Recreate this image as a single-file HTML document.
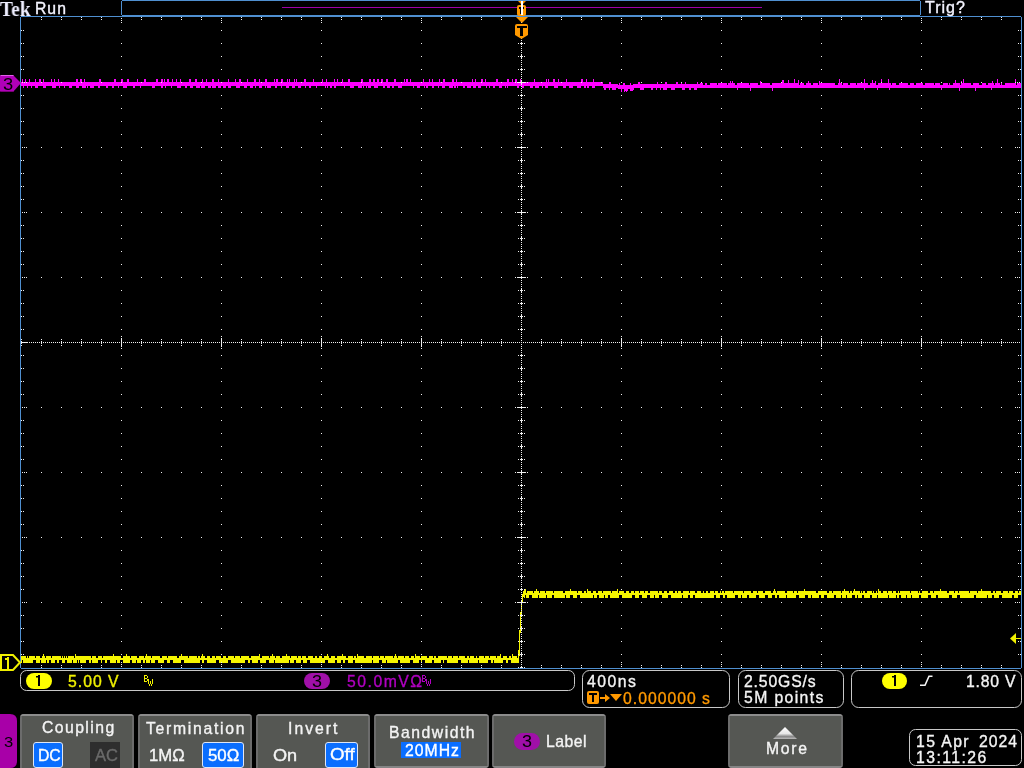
<!DOCTYPE html>
<html><head><meta charset="utf-8">
<style>
html,body{margin:0;padding:0;background:#000;width:1024px;height:768px;overflow:hidden;}
body{position:relative;font-family:"Liberation Sans",sans-serif;color:#fff;}
.t{position:absolute;white-space:nowrap;line-height:1;transform-origin:0 0;-webkit-text-stroke:0.35px currentColor;will-change:transform;}
</style></head><body>
<svg width="1024" height="768" viewBox="0 0 1024 768" shape-rendering="crispEdges" style="position:absolute;left:0;top:0">
<path fill="#4f8fd0" d="M20 16H1022v1H20zM20 668H1022v1H20zM20 16V669h1V16zM1021 16V669h1V16zM121 0H921v1H121zM121 15H921v1H121zM121 0V16h1V0zM920 0V16h1V0z"/>
<path fill="#a000a8" d="M282 7H762v1H282z"/>
<path fill="#ff00ff" d="M21 82V86h1V82zM22 79V86h1V79zM23 82V88h1V82zM24 82V86h1V82zM25 79V86h1V79zM26 82V86h1V82zM27 82V88h1V82zM28 82V86h1V82zM29 79V86h1V79zM30 82V86h1V82zM31 82V88h1V82zM32 82V86h1V82zM33 82V86h1V82zM34 82V86h1V82zM35 79V88h1V79zM36 82V88h1V82zM37 82V88h1V82zM38 82V86h1V82zM39 79V86h1V79zM40 79V86h1V79zM41 82V86h1V82zM42 82V86h1V82zM43 79V88h1V79zM44 82V88h1V82zM45 82V88h1V82zM46 82V86h1V82zM47 82V86h1V82zM48 82V86h1V82zM49 82V86h1V82zM50 82V86h1V82zM51 79V86h1V79zM52 82V88h1V82zM53 82V88h1V82zM54 79V88h1V79zM55 82V88h1V82zM56 82V86h1V82zM57 82V86h1V82zM58 79V86h1V79zM59 82V88h1V82zM60 82V86h1V82zM61 82V86h1V82zM62 82V86h1V82zM63 82V86h1V82zM64 82V88h1V82zM65 82V86h1V82zM66 82V86h1V82zM67 82V86h1V82zM68 82V86h1V82zM69 82V88h1V82zM70 82V88h1V82zM71 82V88h1V82zM72 82V86h1V82zM73 82V86h1V82zM74 82V86h1V82zM75 82V86h1V82zM76 79V88h1V79zM77 79V88h1V79zM78 82V88h1V82zM79 82V86h1V82zM80 79V86h1V79zM81 79V86h1V79zM82 82V88h1V82zM83 82V88h1V82zM84 79V88h1V79zM85 82V88h1V82zM86 82V86h1V82zM87 82V88h1V82zM88 82V86h1V82zM89 82V86h1V82zM90 82V88h1V82zM91 82V88h1V82zM92 82V88h1V82zM93 82V88h1V82zM94 82V86h1V82zM95 82V86h1V82zM96 82V86h1V82zM97 82V86h1V82zM98 82V88h1V82zM99 79V88h1V79zM100 79V86h1V79zM101 82V86h1V82zM102 82V86h1V82zM103 82V86h1V82zM104 82V86h1V82zM105 82V86h1V82zM106 82V88h1V82zM107 82V88h1V82zM108 82V86h1V82zM109 82V86h1V82zM110 82V86h1V82zM111 82V86h1V82zM112 82V88h1V82zM113 82V88h1V82zM114 79V86h1V79zM115 79V86h1V79zM116 82V86h1V82zM117 82V86h1V82zM118 82V88h1V82zM119 82V86h1V82zM120 82V86h1V82zM121 79V86h1V79zM122 79V86h1V79zM123 82V88h1V82zM124 82V88h1V82zM125 82V88h1V82zM126 82V88h1V82zM127 79V86h1V79zM128 79V86h1V79zM129 82V86h1V82zM130 82V86h1V82zM131 82V86h1V82zM132 82V86h1V82zM133 82V88h1V82zM134 82V88h1V82zM135 82V86h1V82zM136 82V86h1V82zM137 79V86h1V79zM138 82V86h1V82zM139 82V86h1V82zM140 82V88h1V82zM141 82V86h1V82zM142 82V86h1V82zM143 82V86h1V82zM144 79V86h1V79zM145 79V86h1V79zM146 82V86h1V82zM147 82V86h1V82zM148 82V86h1V82zM149 82V86h1V82zM150 82V86h1V82zM151 82V86h1V82zM152 82V88h1V82zM153 82V88h1V82zM154 82V88h1V82zM155 82V86h1V82zM156 79V86h1V79zM157 79V86h1V79zM158 82V86h1V82zM159 82V86h1V82zM160 82V86h1V82zM161 79V88h1V79zM162 79V88h1V79zM163 82V86h1V82zM164 79V86h1V79zM165 82V88h1V82zM166 82V86h1V82zM167 79V86h1V79zM168 79V86h1V79zM169 82V86h1V82zM170 82V86h1V82zM171 82V88h1V82zM172 79V86h1V79zM173 82V86h1V82zM174 82V86h1V82zM175 82V86h1V82zM176 79V86h1V79zM177 82V88h1V82zM178 82V88h1V82zM179 82V88h1V82zM180 79V88h1V79zM181 82V86h1V82zM182 82V86h1V82zM183 82V86h1V82zM184 82V86h1V82zM185 82V88h1V82zM186 82V88h1V82zM187 82V86h1V82zM188 82V86h1V82zM189 79V86h1V79zM190 79V88h1V79zM191 82V88h1V82zM192 82V88h1V82zM193 82V86h1V82zM194 82V86h1V82zM195 79V86h1V79zM196 79V88h1V79zM197 82V88h1V82zM198 82V88h1V82zM199 82V88h1V82zM200 82V86h1V82zM201 82V88h1V82zM202 79V88h1V79zM203 82V88h1V82zM204 82V88h1V82zM205 82V86h1V82zM206 79V86h1V79zM207 82V86h1V82zM208 82V88h1V82zM209 82V88h1V82zM210 82V88h1V82zM211 82V86h1V82zM212 79V88h1V79zM213 79V88h1V79zM214 82V88h1V82zM215 82V88h1V82zM216 82V86h1V82zM217 82V86h1V82zM218 79V88h1V79zM219 82V88h1V82zM220 82V88h1V82zM221 82V86h1V82zM222 82V86h1V82zM223 82V88h1V82zM224 82V88h1V82zM225 82V88h1V82zM226 82V86h1V82zM227 82V86h1V82zM228 79V88h1V79zM229 82V88h1V82zM230 82V88h1V82zM231 82V86h1V82zM232 82V86h1V82zM233 82V86h1V82zM234 82V86h1V82zM235 79V86h1V79zM236 82V88h1V82zM237 82V88h1V82zM238 82V88h1V82zM239 79V88h1V79zM240 79V86h1V79zM241 82V86h1V82zM242 82V86h1V82zM243 82V86h1V82zM244 82V88h1V82zM245 82V88h1V82zM246 82V88h1V82zM247 79V86h1V79zM248 82V86h1V82zM249 82V86h1V82zM250 82V88h1V82zM251 82V88h1V82zM252 82V88h1V82zM253 82V86h1V82zM254 79V86h1V79zM255 79V88h1V79zM256 82V86h1V82zM257 82V86h1V82zM258 82V86h1V82zM259 79V88h1V79zM260 82V88h1V82zM261 82V88h1V82zM262 82V86h1V82zM263 82V86h1V82zM264 82V86h1V82zM265 79V88h1V79zM266 79V86h1V79zM267 82V88h1V82zM268 82V88h1V82zM269 82V88h1V82zM270 82V88h1V82zM271 82V86h1V82zM272 82V86h1V82zM273 82V86h1V82zM274 79V86h1V79zM275 82V88h1V82zM276 79V88h1V79zM277 79V86h1V79zM278 82V86h1V82zM279 82V86h1V82zM280 82V86h1V82zM281 79V88h1V79zM282 79V86h1V79zM283 82V86h1V82zM284 82V86h1V82zM285 82V86h1V82zM286 82V88h1V82zM287 79V88h1V79zM288 82V88h1V82zM289 79V86h1V79zM290 82V86h1V82zM291 82V86h1V82zM292 82V88h1V82zM293 82V88h1V82zM294 79V88h1V79zM295 82V86h1V82zM296 79V86h1V79zM297 82V86h1V82zM298 82V88h1V82zM299 82V88h1V82zM300 82V88h1V82zM301 82V86h1V82zM302 82V86h1V82zM303 82V86h1V82zM304 79V86h1V79zM305 79V88h1V79zM306 82V86h1V82zM307 82V86h1V82zM308 82V86h1V82zM309 82V88h1V82zM310 82V88h1V82zM311 82V86h1V82zM312 82V86h1V82zM313 79V86h1V79zM314 82V86h1V82zM315 82V86h1V82zM316 82V88h1V82zM317 82V86h1V82zM318 82V86h1V82zM319 82V86h1V82zM320 82V86h1V82zM321 82V86h1V82zM322 79V86h1V79zM323 82V86h1V82zM324 82V86h1V82zM325 82V88h1V82zM326 79V86h1V79zM327 82V88h1V82zM328 82V86h1V82zM329 82V86h1V82zM330 82V88h1V82zM331 82V88h1V82zM332 82V86h1V82zM333 82V86h1V82zM334 79V88h1V79zM335 82V88h1V82zM336 82V86h1V82zM337 79V86h1V79zM338 82V86h1V82zM339 82V86h1V82zM340 82V86h1V82zM341 82V86h1V82zM342 79V86h1V79zM343 82V86h1V82zM344 82V88h1V82zM345 82V86h1V82zM346 82V86h1V82zM347 82V86h1V82zM348 79V86h1V79zM349 79V86h1V79zM350 82V88h1V82zM351 82V88h1V82zM352 82V88h1V82zM353 82V88h1V82zM354 82V86h1V82zM355 82V86h1V82zM356 82V86h1V82zM357 82V86h1V82zM358 82V88h1V82zM359 82V88h1V82zM360 82V88h1V82zM361 79V88h1V79zM362 79V86h1V79zM363 82V88h1V82zM364 82V86h1V82zM365 82V86h1V82zM366 82V88h1V82zM367 82V86h1V82zM368 82V88h1V82zM369 79V88h1V79zM370 79V88h1V79zM371 82V86h1V82zM372 82V86h1V82zM373 79V86h1V79zM374 79V88h1V79zM375 82V88h1V82zM376 82V88h1V82zM377 79V88h1V79zM378 79V86h1V79zM379 82V86h1V82zM380 82V86h1V82zM381 79V86h1V79zM382 79V86h1V79zM383 82V88h1V82zM384 82V88h1V82zM385 82V86h1V82zM386 79V86h1V79zM387 79V88h1V79zM388 82V88h1V82zM389 82V88h1V82zM390 82V86h1V82zM391 82V86h1V82zM392 82V88h1V82zM393 82V88h1V82zM394 79V86h1V79zM395 79V86h1V79zM396 82V86h1V82zM397 82V86h1V82zM398 82V88h1V82zM399 82V88h1V82zM400 82V88h1V82zM401 82V88h1V82zM402 82V86h1V82zM403 82V86h1V82zM404 79V86h1V79zM405 82V86h1V82zM406 79V86h1V79zM407 79V86h1V79zM408 82V86h1V82zM409 82V86h1V82zM410 79V86h1V79zM411 82V86h1V82zM412 82V86h1V82zM413 82V88h1V82zM414 82V86h1V82zM415 82V86h1V82zM416 82V86h1V82zM417 82V88h1V82zM418 82V88h1V82zM419 82V88h1V82zM420 82V86h1V82zM421 82V86h1V82zM422 82V86h1V82zM423 79V86h1V79zM424 82V88h1V82zM425 82V86h1V82zM426 82V88h1V82zM427 82V88h1V82zM428 82V86h1V82zM429 79V86h1V79zM430 82V86h1V82zM431 82V86h1V82zM432 79V88h1V79zM433 82V88h1V82zM434 82V86h1V82zM435 82V86h1V82zM436 82V86h1V82zM437 82V86h1V82zM438 82V88h1V82zM439 79V86h1V79zM440 82V86h1V82zM441 82V86h1V82zM442 82V88h1V82zM443 79V88h1V79zM444 79V88h1V79zM445 82V86h1V82zM446 82V86h1V82zM447 82V86h1V82zM448 82V86h1V82zM449 82V88h1V82zM450 82V88h1V82zM451 82V88h1V82zM452 79V88h1V79zM453 79V86h1V79zM454 82V88h1V82zM455 82V88h1V82zM456 79V86h1V79zM457 82V88h1V82zM458 82V86h1V82zM459 82V86h1V82zM460 82V86h1V82zM461 82V86h1V82zM462 82V86h1V82zM463 82V88h1V82zM464 82V88h1V82zM465 82V86h1V82zM466 82V86h1V82zM467 82V88h1V82zM468 82V88h1V82zM469 82V88h1V82zM470 82V88h1V82zM471 82V86h1V82zM472 79V86h1V79zM473 82V88h1V82zM474 82V88h1V82zM475 79V88h1V79zM476 82V86h1V82zM477 82V86h1V82zM478 82V88h1V82zM479 82V88h1V82zM480 82V88h1V82zM481 79V86h1V79zM482 79V86h1V79zM483 82V86h1V82zM484 82V86h1V82zM485 79V86h1V79zM486 82V88h1V82zM487 82V86h1V82zM488 82V86h1V82zM489 82V88h1V82zM490 82V86h1V82zM491 82V86h1V82zM492 82V86h1V82zM493 82V88h1V82zM494 82V88h1V82zM495 82V86h1V82zM496 79V86h1V79zM497 79V86h1V79zM498 82V86h1V82zM499 82V88h1V82zM500 82V88h1V82zM501 82V88h1V82zM502 82V86h1V82zM503 82V86h1V82zM504 82V86h1V82zM505 82V88h1V82zM506 82V86h1V82zM507 79V88h1V79zM508 79V86h1V79zM509 82V86h1V82zM510 82V86h1V82zM511 82V86h1V82zM512 79V86h1V79zM513 82V86h1V82zM514 82V86h1V82zM515 79V86h1V79zM516 79V86h1V79zM517 82V88h1V82zM518 82V88h1V82zM519 82V86h1V82zM520 79V86h1V79zM521 82V86h1V82zM522 82V88h1V82zM523 82V88h1V82zM524 82V86h1V82zM525 82V86h1V82zM526 82V86h1V82zM527 82V86h1V82zM528 82V86h1V82zM529 82V86h1V82zM530 82V88h1V82zM531 82V88h1V82zM532 82V88h1V82zM533 82V86h1V82zM534 79V86h1V79zM535 82V88h1V82zM536 82V88h1V82zM537 82V88h1V82zM538 82V88h1V82zM539 82V86h1V82zM540 82V86h1V82zM541 82V86h1V82zM542 82V88h1V82zM543 82V86h1V82zM544 82V86h1V82zM545 82V88h1V82zM546 79V88h1V79zM547 82V88h1V82zM548 79V86h1V79zM549 82V86h1V82zM550 82V86h1V82zM551 82V86h1V82zM552 82V86h1V82zM553 79V86h1V79zM554 79V88h1V79zM555 82V88h1V82zM556 82V88h1V82zM557 82V88h1V82zM558 79V86h1V79zM559 82V86h1V82zM560 82V86h1V82zM561 82V86h1V82zM562 82V86h1V82zM563 82V88h1V82zM564 82V88h1V82zM565 82V88h1V82zM566 79V86h1V79zM567 82V86h1V82zM568 82V86h1V82zM569 82V88h1V82zM570 82V88h1V82zM571 82V88h1V82zM572 82V88h1V82zM573 82V86h1V82zM574 82V86h1V82zM575 82V86h1V82zM576 82V86h1V82zM577 82V88h1V82zM578 82V88h1V82zM579 82V88h1V82zM580 82V88h1V82zM581 79V86h1V79zM582 79V86h1V79zM583 82V86h1V82zM584 82V88h1V82zM585 82V88h1V82zM586 79V86h1V79zM587 82V88h1V82zM588 82V88h1V82zM589 82V86h1V82zM590 82V86h1V82zM591 82V86h1V82zM592 82V88h1V82zM593 79V88h1V79zM594 82V88h1V82zM595 82V86h1V82zM596 82V86h1V82zM597 82V86h1V82zM598 82V86h1V82zM599 82V86h1V82zM600 82V86h1V82zM601 82V86h1V82zM602 82V86h1V82zM603 84V88h1V84zM604 84V90h1V84zM605 84V90h1V84zM606 84V88h1V84zM607 84V88h1V84zM608 84V88h1V84zM609 82V90h1V82zM610 82V88h1V82zM611 84V88h1V84zM612 84V90h1V84zM613 84V90h1V84zM614 84V90h1V84zM615 84V90h1V84zM616 84V88h1V84zM617 84V88h1V84zM618 85V89h1V85zM619 83V89h1V83zM620 85V89h1V85zM621 85V92h1V85zM622 85V89h1V85zM623 83V89h1V83zM624 83V92h1V83zM625 85V91h1V85zM626 85V92h1V85zM627 85V91h1V85zM628 85V89h1V85zM629 85V89h1V85zM630 83V91h1V83zM631 85V91h1V85zM632 85V91h1V85zM633 84V90h1V84zM634 84V88h1V84zM635 84V88h1V84zM636 84V88h1V84zM637 84V88h1V84zM638 82V88h1V82zM639 82V88h1V82zM640 84V90h1V84zM641 84V90h1V84zM642 84V90h1V84zM643 84V90h1V84zM644 84V88h1V84zM645 84V88h1V84zM646 84V88h1V84zM647 84V88h1V84zM648 84V88h1V84zM649 84V88h1V84zM650 84V88h1V84zM651 84V90h1V84zM652 84V90h1V84zM653 84V88h1V84zM654 84V88h1V84zM655 84V88h1V84zM656 84V90h1V84zM657 82V88h1V82zM658 84V88h1V84zM659 84V88h1V84zM660 84V90h1V84zM661 84V88h1V84zM662 84V88h1V84zM663 84V90h1V84zM664 84V90h1V84zM665 82V90h1V82zM666 82V90h1V82zM667 84V88h1V84zM668 84V88h1V84zM669 84V88h1V84zM670 84V88h1V84zM671 84V90h1V84zM672 84V90h1V84zM673 84V90h1V84zM674 84V90h1V84zM675 84V88h1V84zM676 82V88h1V82zM677 82V88h1V82zM678 84V88h1V84zM679 84V88h1V84zM680 84V88h1V84zM681 82V88h1V82zM682 84V90h1V84zM683 84V90h1V84zM684 84V90h1V84zM685 82V88h1V82zM686 84V88h1V84zM687 84V88h1V84zM688 84V88h1V84zM689 84V90h1V84zM690 84V90h1V84zM691 84V88h1V84zM692 84V88h1V84zM693 84V88h1V84zM694 84V90h1V84zM695 84V90h1V84zM696 84V90h1V84zM697 82V88h1V82zM698 84V88h1V84zM699 84V88h1V84zM700 83V88h1V83zM701 83V88h1V83zM702 83V88h1V83zM703 85V88h1V85zM704 85V88h1V85zM705 83V88h1V83zM706 83V88h1V83zM707 85V88h1V85zM708 85V88h1V85zM709 85V88h1V85zM710 83V88h1V83zM711 83V88h1V83zM712 83V88h1V83zM713 83V88h1V83zM714 83V88h1V83zM715 83V88h1V83zM716 83V88h1V83zM717 85V88h1V85zM718 83V88h1V83zM719 83V88h1V83zM720 83V88h1V83zM721 83V88h1V83zM722 83V88h1V83zM723 83V88h1V83zM724 83V88h1V83zM725 83V88h1V83zM726 83V88h1V83zM727 85V88h1V85zM728 83V88h1V83zM729 83V88h1V83zM730 81V88h1V81zM731 83V88h1V83zM732 81V88h1V81zM733 83V88h1V83zM734 83V88h1V83zM735 85V88h1V85zM736 85V88h1V85zM737 83V90h1V83zM738 83V88h1V83zM739 83V88h1V83zM740 83V88h1V83zM741 83V88h1V83zM742 83V88h1V83zM743 83V88h1V83zM744 83V88h1V83zM745 83V88h1V83zM746 83V88h1V83zM747 83V88h1V83zM748 83V88h1V83zM749 85V88h1V85zM750 83V91h1V83zM751 83V88h1V83zM752 83V88h1V83zM753 83V88h1V83zM754 83V88h1V83zM755 83V88h1V83zM756 83V88h1V83zM757 83V88h1V83zM758 85V88h1V85zM759 85V88h1V85zM760 81V88h1V81zM761 83V88h1V83zM762 83V88h1V83zM763 83V88h1V83zM764 83V88h1V83zM765 83V88h1V83zM766 83V88h1V83zM767 83V88h1V83zM768 83V88h1V83zM769 83V88h1V83zM770 85V88h1V85zM771 85V88h1V85zM772 83V91h1V83zM773 83V88h1V83zM774 83V88h1V83zM775 83V88h1V83zM776 83V88h1V83zM777 83V88h1V83zM778 83V88h1V83zM779 83V88h1V83zM780 83V88h1V83zM781 83V88h1V83zM782 80V88h1V80zM783 80V88h1V80zM784 83V88h1V83zM785 83V88h1V83zM786 83V88h1V83zM787 83V88h1V83zM788 80V88h1V80zM789 83V88h1V83zM790 83V88h1V83zM791 83V88h1V83zM792 83V88h1V83zM793 83V88h1V83zM794 79V88h1V79zM795 83V88h1V83zM796 83V88h1V83zM797 83V88h1V83zM798 80V88h1V80zM799 85V88h1V85zM800 83V88h1V83zM801 83V88h1V83zM802 83V88h1V83zM803 83V88h1V83zM804 85V88h1V85zM805 85V88h1V85zM806 83V88h1V83zM807 83V88h1V83zM808 81V88h1V81zM809 83V88h1V83zM810 83V88h1V83zM811 85V88h1V85zM812 85V88h1V85zM813 83V88h1V83zM814 83V88h1V83zM815 83V88h1V83zM816 83V88h1V83zM817 83V88h1V83zM818 85V88h1V85zM819 81V88h1V81zM820 83V88h1V83zM821 83V88h1V83zM822 83V88h1V83zM823 83V88h1V83zM824 83V88h1V83zM825 83V88h1V83zM826 83V88h1V83zM827 83V88h1V83zM828 83V88h1V83zM829 83V88h1V83zM830 83V88h1V83zM831 83V88h1V83zM832 83V88h1V83zM833 83V88h1V83zM834 83V88h1V83zM835 85V88h1V85zM836 85V88h1V85zM837 85V88h1V85zM838 83V88h1V83zM839 79V88h1V79zM840 83V88h1V83zM841 83V88h1V83zM842 85V88h1V85zM843 83V88h1V83zM844 83V88h1V83zM845 83V88h1V83zM846 83V88h1V83zM847 83V88h1V83zM848 85V88h1V85zM849 85V88h1V85zM850 83V88h1V83zM851 83V88h1V83zM852 83V88h1V83zM853 83V88h1V83zM854 83V88h1V83zM855 83V88h1V83zM856 85V88h1V85zM857 83V88h1V83zM858 83V88h1V83zM859 83V88h1V83zM860 83V88h1V83zM861 83V88h1V83zM862 83V88h1V83zM863 83V88h1V83zM864 79V90h1V79zM865 83V88h1V83zM866 83V88h1V83zM867 83V88h1V83zM868 85V88h1V85zM869 85V88h1V85zM870 83V88h1V83zM871 83V88h1V83zM872 80V88h1V80zM873 83V88h1V83zM874 83V88h1V83zM875 81V88h1V81zM876 85V88h1V85zM877 85V90h1V85zM878 83V88h1V83zM879 83V88h1V83zM880 83V88h1V83zM881 79V88h1V79zM882 83V88h1V83zM883 83V88h1V83zM884 83V88h1V83zM885 83V88h1V83zM886 83V88h1V83zM887 83V88h1V83zM888 79V88h1V79zM889 83V90h1V83zM890 83V88h1V83zM891 85V88h1V85zM892 83V88h1V83zM893 83V88h1V83zM894 83V88h1V83zM895 83V88h1V83zM896 85V88h1V85zM897 85V88h1V85zM898 85V88h1V85zM899 83V88h1V83zM900 83V88h1V83zM901 83V88h1V83zM902 83V88h1V83zM903 83V88h1V83zM904 83V88h1V83zM905 83V88h1V83zM906 83V88h1V83zM907 83V88h1V83zM908 85V88h1V85zM909 85V88h1V85zM910 83V88h1V83zM911 83V88h1V83zM912 83V88h1V83zM913 83V88h1V83zM914 85V88h1V85zM915 85V88h1V85zM916 83V88h1V83zM917 83V88h1V83zM918 83V88h1V83zM919 83V88h1V83zM920 83V88h1V83zM921 83V88h1V83zM922 83V88h1V83zM923 85V88h1V85zM924 85V88h1V85zM925 83V88h1V83zM926 83V88h1V83zM927 83V88h1V83zM928 83V88h1V83zM929 83V88h1V83zM930 83V88h1V83zM931 83V88h1V83zM932 83V88h1V83zM933 83V88h1V83zM934 85V88h1V85zM935 83V88h1V83zM936 83V88h1V83zM937 83V88h1V83zM938 83V88h1V83zM939 83V88h1V83zM940 85V88h1V85zM941 85V90h1V85zM942 85V88h1V85zM943 83V88h1V83zM944 83V88h1V83zM945 83V88h1V83zM946 83V88h1V83zM947 83V88h1V83zM948 85V88h1V85zM949 83V88h1V83zM950 85V88h1V85zM951 85V88h1V85zM952 85V88h1V85zM953 83V88h1V83zM954 83V88h1V83zM955 80V88h1V80zM956 83V88h1V83zM957 83V88h1V83zM958 83V88h1V83zM959 83V91h1V83zM960 85V88h1V85zM961 81V88h1V81zM962 83V88h1V83zM963 79V88h1V79zM964 83V88h1V83zM965 83V88h1V83zM966 83V88h1V83zM967 83V88h1V83zM968 83V88h1V83zM969 83V88h1V83zM970 83V88h1V83zM971 85V88h1V85zM972 85V88h1V85zM973 83V88h1V83zM974 83V88h1V83zM975 83V91h1V83zM976 83V88h1V83zM977 83V88h1V83zM978 83V88h1V83zM979 85V88h1V85zM980 85V88h1V85zM981 85V88h1V85zM982 83V88h1V83zM983 83V88h1V83zM984 83V88h1V83zM985 83V88h1V83zM986 85V88h1V85zM987 85V88h1V85zM988 83V88h1V83zM989 83V88h1V83zM990 83V88h1V83zM991 83V90h1V83zM992 81V88h1V81zM993 83V88h1V83zM994 85V88h1V85zM995 83V88h1V83zM996 83V88h1V83zM997 79V88h1V79zM998 83V88h1V83zM999 83V88h1V83zM1000 85V88h1V85zM1001 83V88h1V83zM1002 85V88h1V85zM1003 85V88h1V85zM1004 85V88h1V85zM1005 83V88h1V83zM1006 83V88h1V83zM1007 83V88h1V83zM1008 83V88h1V83zM1009 83V88h1V83zM1010 83V88h1V83zM1011 83V88h1V83zM1012 83V88h1V83zM1013 83V88h1V83zM1014 83V88h1V83zM1015 79V88h1V79zM1016 85V88h1V85zM1017 83V88h1V83zM1018 83V88h1V83zM1019 83V88h1V83zM1020 83V88h1V83z"/>
<path fill="#f5f500" d="M21 656V663h1V656zM22 656V660h1V656zM23 656V663h1V656zM24 656V663h1V656zM25 656V663h1V656zM26 658V663h1V658zM27 656V663h1V656zM28 658V663h1V658zM29 656V663h1V656zM30 656V663h1V656zM31 656V663h1V656zM32 656V663h1V656zM33 656V660h1V656zM34 656V660h1V656zM35 658V660h1V658zM36 656V663h1V656zM37 656V663h1V656zM38 656V663h1V656zM39 656V663h1V656zM40 658V660h1V658zM41 658V663h1V658zM42 656V663h1V656zM43 654V663h1V654zM44 656V663h1V656zM45 658V663h1V658zM46 656V660h1V656zM47 656V663h1V656zM48 656V663h1V656zM49 656V660h1V656zM50 656V660h1V656zM51 658V663h1V658zM52 656V663h1V656zM53 656V663h1V656zM54 656V663h1V656zM55 656V660h1V656zM56 656V660h1V656zM57 656V663h1V656zM58 656V663h1V656zM59 656V660h1V656zM60 656V660h1V656zM61 658V660h1V658zM62 656V663h1V656zM63 658V663h1V658zM64 656V663h1V656zM65 658V660h1V658zM66 656V660h1V656zM67 658V663h1V658zM68 656V663h1V656zM69 656V663h1V656zM70 656V663h1V656zM71 656V663h1V656zM72 656V660h1V656zM73 656V663h1V656zM74 658V663h1V658zM75 654V663h1V654zM76 656V663h1V656zM77 656V660h1V656zM78 656V663h1V656zM79 656V660h1V656zM80 656V663h1V656zM81 656V663h1V656zM82 656V663h1V656zM83 656V663h1V656zM84 656V663h1V656zM85 656V663h1V656zM86 656V660h1V656zM87 656V660h1V656zM88 656V660h1V656zM89 656V663h1V656zM90 656V663h1V656zM91 658V660h1V658zM92 656V663h1V656zM93 656V663h1V656zM94 656V663h1V656zM95 656V663h1V656zM96 658V663h1V658zM97 658V663h1V658zM98 656V660h1V656zM99 656V660h1V656zM100 656V660h1V656zM101 656V663h1V656zM102 658V660h1V658zM103 656V660h1V656zM104 656V660h1V656zM105 656V663h1V656zM106 656V663h1V656zM107 656V660h1V656zM108 656V660h1V656zM109 656V660h1V656zM110 656V663h1V656zM111 656V663h1V656zM112 656V663h1V656zM113 654V663h1V654zM114 656V663h1V656zM115 656V663h1V656zM116 656V660h1V656zM117 656V663h1V656zM118 656V663h1V656zM119 656V663h1V656zM120 656V660h1V656zM121 658V660h1V658zM122 658V660h1V658zM123 656V663h1V656zM124 656V663h1V656zM125 656V663h1V656zM126 654V663h1V654zM127 656V663h1V656zM128 656V663h1V656zM129 656V663h1V656zM130 658V660h1V658zM131 656V660h1V656zM132 656V663h1V656zM133 656V663h1V656zM134 656V663h1V656zM135 656V663h1V656zM136 656V660h1V656zM137 658V663h1V658zM138 658V663h1V658zM139 656V663h1V656zM140 656V663h1V656zM141 656V660h1V656zM142 656V660h1V656zM143 656V663h1V656zM144 658V663h1V658zM145 656V660h1V656zM146 654V663h1V654zM147 656V663h1V656zM148 656V663h1V656zM149 656V663h1V656zM150 656V660h1V656zM151 658V663h1V658zM152 656V663h1V656zM153 656V663h1V656zM154 656V663h1V656zM155 656V660h1V656zM156 656V660h1V656zM157 656V660h1V656zM158 656V663h1V656zM159 656V663h1V656zM160 658V663h1V658zM161 658V663h1V658zM162 656V663h1V656zM163 656V663h1V656zM164 656V660h1V656zM165 656V660h1V656zM166 656V660h1V656zM167 658V663h1V658zM168 656V663h1V656zM169 656V663h1V656zM170 656V660h1V656zM171 656V660h1V656zM172 656V660h1V656zM173 656V663h1V656zM174 656V663h1V656zM175 656V663h1V656zM176 656V663h1V656zM177 658V663h1V658zM178 658V663h1V658zM179 656V663h1V656zM180 656V663h1V656zM181 654V660h1V654zM182 656V660h1V656zM183 656V660h1V656zM184 656V663h1V656zM185 656V663h1V656zM186 656V663h1V656zM187 656V663h1V656zM188 658V663h1V658zM189 656V663h1V656zM190 656V663h1V656zM191 656V663h1V656zM192 656V663h1V656zM193 656V663h1V656zM194 656V663h1V656zM195 656V663h1V656zM196 656V663h1V656zM197 658V663h1V658zM198 656V663h1V656zM199 656V663h1V656zM200 658V660h1V658zM201 656V660h1V656zM202 654V663h1V654zM203 656V663h1V656zM204 656V660h1V656zM205 658V660h1V658zM206 658V660h1V658zM207 656V663h1V656zM208 656V663h1V656zM209 656V663h1V656zM210 658V663h1V658zM211 658V663h1V658zM212 656V663h1V656zM213 656V663h1V656zM214 656V663h1V656zM215 658V663h1V658zM216 656V660h1V656zM217 656V660h1V656zM218 656V660h1V656zM219 656V663h1V656zM220 656V663h1V656zM221 658V663h1V658zM222 658V663h1V658zM223 656V663h1V656zM224 656V663h1V656zM225 656V663h1V656zM226 658V663h1V658zM227 658V663h1V658zM228 656V660h1V656zM229 656V660h1V656zM230 656V660h1V656zM231 656V663h1V656zM232 656V663h1V656zM233 656V663h1V656zM234 658V663h1V658zM235 656V663h1V656zM236 656V663h1V656zM237 656V663h1V656zM238 656V663h1V656zM239 656V663h1V656zM240 658V663h1V658zM241 656V663h1V656zM242 656V663h1V656zM243 656V663h1V656zM244 656V663h1V656zM245 656V660h1V656zM246 656V660h1V656zM247 656V660h1V656zM248 656V663h1V656zM249 658V663h1V658zM250 658V660h1V658zM251 656V660h1V656zM252 656V663h1V656zM253 656V663h1V656zM254 656V663h1V656zM255 656V663h1V656zM256 656V663h1V656zM257 656V663h1V656zM258 656V660h1V656zM259 654V660h1V654zM260 658V663h1V658zM261 658V663h1V658zM262 656V663h1V656zM263 656V663h1V656zM264 656V663h1V656zM265 656V663h1V656zM266 656V660h1V656zM267 656V660h1V656zM268 656V660h1V656zM269 658V663h1V658zM270 656V663h1V656zM271 656V663h1V656zM272 654V663h1V654zM273 656V663h1V656zM274 656V660h1V656zM275 658V663h1V658zM276 656V663h1V656zM277 656V663h1V656zM278 656V663h1V656zM279 656V663h1V656zM280 658V663h1V658zM281 658V663h1V658zM282 656V663h1V656zM283 656V663h1V656zM284 656V663h1V656zM285 656V663h1V656zM286 654V663h1V654zM287 656V663h1V656zM288 656V663h1V656zM289 656V660h1V656zM290 658V663h1V658zM291 656V663h1V656zM292 656V663h1V656zM293 656V663h1V656zM294 656V660h1V656zM295 656V660h1V656zM296 656V663h1V656zM297 658V663h1V658zM298 656V663h1V656zM299 656V663h1V656zM300 656V663h1V656zM301 658V660h1V658zM302 656V660h1V656zM303 656V663h1V656zM304 656V663h1V656zM305 656V663h1V656zM306 658V663h1V658zM307 658V660h1V658zM308 656V660h1V656zM309 656V660h1V656zM310 656V663h1V656zM311 656V663h1V656zM312 656V663h1V656zM313 658V663h1V658zM314 658V663h1V658zM315 656V663h1V656zM316 656V663h1V656zM317 658V663h1V658zM318 658V663h1V658zM319 656V663h1V656zM320 656V663h1V656zM321 656V663h1V656zM322 658V663h1V658zM323 658V663h1V658zM324 656V663h1V656zM325 656V660h1V656zM326 656V660h1V656zM327 654V660h1V654zM328 656V663h1V656zM329 658V663h1V658zM330 658V663h1V658zM331 656V663h1V656zM332 656V663h1V656zM333 656V663h1V656zM334 656V663h1V656zM335 658V660h1V658zM336 658V660h1V658zM337 656V663h1V656zM338 656V663h1V656zM339 656V663h1V656zM340 656V663h1V656zM341 656V660h1V656zM342 654V660h1V654zM343 656V663h1V656zM344 656V663h1V656zM345 656V660h1V656zM346 658V660h1V658zM347 658V660h1V658zM348 656V663h1V656zM349 656V663h1V656zM350 656V663h1V656zM351 656V663h1V656zM352 656V663h1V656zM353 658V660h1V658zM354 656V660h1V656zM355 656V663h1V656zM356 658V663h1V658zM357 654V663h1V654zM358 656V663h1V656zM359 656V663h1V656zM360 656V663h1V656zM361 656V663h1V656zM362 656V663h1V656zM363 656V663h1V656zM364 658V663h1V658zM365 658V663h1V658zM366 656V663h1V656zM367 656V663h1V656zM368 656V663h1V656zM369 656V663h1V656zM370 656V663h1V656zM371 656V663h1V656zM372 658V660h1V658zM373 656V663h1V656zM374 656V663h1V656zM375 656V663h1V656zM376 656V663h1V656zM377 656V663h1V656zM378 656V663h1V656zM379 658V660h1V658zM380 656V660h1V656zM381 656V660h1V656zM382 656V663h1V656zM383 656V663h1V656zM384 658V663h1V658zM385 656V663h1V656zM386 656V660h1V656zM387 656V663h1V656zM388 656V663h1V656zM389 656V663h1V656zM390 656V663h1V656zM391 656V663h1V656zM392 656V663h1V656zM393 658V663h1V658zM394 656V663h1V656zM395 654V663h1V654zM396 656V663h1V656zM397 658V663h1V658zM398 656V660h1V656zM399 656V660h1V656zM400 656V663h1V656zM401 656V663h1V656zM402 656V663h1V656zM403 656V663h1V656zM404 658V663h1V658zM405 656V663h1V656zM406 656V663h1V656zM407 656V663h1V656zM408 656V663h1V656zM409 658V663h1V658zM410 658V660h1V658zM411 656V660h1V656zM412 656V660h1V656zM413 656V663h1V656zM414 658V663h1V658zM415 654V663h1V654zM416 656V663h1V656zM417 656V663h1V656zM418 656V663h1V656zM419 656V660h1V656zM420 658V660h1V658zM421 656V663h1V656zM422 656V660h1V656zM423 656V660h1V656zM424 656V660h1V656zM425 656V663h1V656zM426 656V663h1V656zM427 658V663h1V658zM428 658V663h1V658zM429 656V663h1V656zM430 656V663h1V656zM431 656V663h1V656zM432 656V660h1V656zM433 658V660h1V658zM434 656V663h1V656zM435 656V663h1V656zM436 658V663h1V658zM437 658V663h1V658zM438 656V663h1V656zM439 656V663h1V656zM440 656V663h1V656zM441 656V660h1V656zM442 656V660h1V656zM443 656V663h1V656zM444 656V660h1V656zM445 656V660h1V656zM446 656V660h1V656zM447 658V663h1V658zM448 656V663h1V656zM449 656V663h1V656zM450 656V663h1V656zM451 656V663h1V656zM452 658V663h1V658zM453 656V663h1V656zM454 656V663h1V656zM455 656V663h1V656zM456 656V663h1V656zM457 656V663h1V656zM458 658V660h1V658zM459 656V660h1V656zM460 656V660h1V656zM461 656V663h1V656zM462 656V663h1V656zM463 656V663h1V656zM464 656V663h1V656zM465 658V663h1V658zM466 658V663h1V658zM467 656V663h1V656zM468 656V660h1V656zM469 658V663h1V658zM470 656V663h1V656zM471 656V663h1V656zM472 656V663h1V656zM473 656V663h1V656zM474 658V663h1V658zM475 658V663h1V658zM476 656V663h1V656zM477 658V663h1V658zM478 658V660h1V658zM479 656V663h1V656zM480 656V663h1V656zM481 656V663h1V656zM482 656V663h1V656zM483 656V663h1V656zM484 658V663h1V658zM485 656V663h1V656zM486 656V663h1V656zM487 656V663h1V656zM488 656V660h1V656zM489 658V660h1V658zM490 656V660h1V656zM491 656V663h1V656zM492 656V663h1V656zM493 656V660h1V656zM494 656V663h1V656zM495 656V663h1V656zM496 658V663h1V658zM497 656V663h1V656zM498 656V663h1V656zM499 656V663h1V656zM500 654V663h1V654zM501 658V663h1V658zM502 658V663h1V658zM503 656V660h1V656zM504 656V660h1V656zM505 656V660h1V656zM506 656V663h1V656zM507 658V663h1V658zM508 658V660h1V658zM509 656V660h1V656zM510 656V660h1V656zM511 658V663h1V658zM512 654V663h1V654zM513 656V663h1V656zM514 656V663h1V656zM515 656V663h1V656zM516 656V663h1V656zM517 658V663h1V658zM525 589V595h1V589zM526 593V598h1V593zM527 591V598h1V591zM528 591V598h1V591zM529 591V595h1V591zM530 591V595h1V591zM531 591V595h1V591zM532 591V598h1V591zM533 593V598h1V593zM534 591V598h1V591zM535 591V598h1V591zM536 589V598h1V589zM537 591V598h1V591zM538 591V595h1V591zM539 593V598h1V593zM540 591V598h1V591zM541 591V598h1V591zM542 591V598h1V591zM543 591V598h1V591zM544 591V598h1V591zM545 593V598h1V593zM546 591V595h1V591zM547 591V598h1V591zM548 591V598h1V591zM549 591V598h1V591zM550 591V598h1V591zM551 591V598h1V591zM552 591V595h1V591zM553 593V595h1V593zM554 591V598h1V591zM555 591V598h1V591zM556 591V598h1V591zM557 591V598h1V591zM558 591V598h1V591zM559 591V598h1V591zM560 591V598h1V591zM561 591V598h1V591zM562 591V598h1V591zM563 593V598h1V593zM564 593V598h1V593zM565 591V595h1V591zM566 591V598h1V591zM567 591V598h1V591zM568 591V598h1V591zM569 591V598h1V591zM570 589V595h1V589zM571 591V595h1V591zM572 591V595h1V591zM573 591V598h1V591zM574 591V598h1V591zM575 591V598h1V591zM576 591V598h1V591zM577 593V595h1V593zM578 591V595h1V591zM579 591V595h1V591zM580 591V598h1V591zM581 591V598h1V591zM582 593V598h1V593zM583 593V598h1V593zM584 591V598h1V591zM585 591V598h1V591zM586 593V598h1V593zM587 589V598h1V589zM588 591V598h1V591zM589 591V598h1V591zM590 591V598h1V591zM591 593V598h1V593zM592 593V598h1V593zM593 591V595h1V591zM594 591V598h1V591zM595 591V598h1V591zM596 593V598h1V593zM597 593V595h1V593zM598 591V595h1V591zM599 591V598h1V591zM600 591V598h1V591zM601 591V598h1V591zM602 593V598h1V593zM603 591V598h1V591zM604 591V595h1V591zM605 591V598h1V591zM606 591V598h1V591zM607 591V598h1V591zM608 591V595h1V591zM609 591V595h1V591zM610 591V598h1V591zM611 593V598h1V593zM612 591V598h1V591zM613 591V598h1V591zM614 591V598h1V591zM615 591V598h1V591zM616 591V598h1V591zM617 589V598h1V589zM618 593V598h1V593zM619 591V595h1V591zM620 591V595h1V591zM621 591V595h1V591zM622 591V598h1V591zM623 591V598h1V591zM624 593V598h1V593zM625 593V598h1V593zM626 591V598h1V591zM627 591V598h1V591zM628 591V598h1V591zM629 593V598h1V593zM630 593V598h1V593zM631 591V598h1V591zM632 591V595h1V591zM633 591V595h1V591zM634 593V595h1V593zM635 591V598h1V591zM636 591V598h1V591zM637 591V598h1V591zM638 591V598h1V591zM639 593V595h1V593zM640 591V595h1V591zM641 591V595h1V591zM642 591V598h1V591zM643 591V598h1V591zM644 593V598h1V593zM645 591V598h1V591zM646 591V598h1V591zM647 591V595h1V591zM648 593V595h1V593zM649 593V595h1V593zM650 591V598h1V591zM651 591V598h1V591zM652 591V598h1V591zM653 591V598h1V591zM654 591V595h1V591zM655 591V598h1V591zM656 591V598h1V591zM657 591V598h1V591zM658 593V598h1V593zM659 591V595h1V591zM660 591V595h1V591zM661 591V595h1V591zM662 593V598h1V593zM663 593V598h1V593zM664 591V598h1V591zM665 591V598h1V591zM666 591V598h1V591zM667 593V598h1V593zM668 593V595h1V593zM669 591V595h1V591zM670 591V595h1V591zM671 591V598h1V591zM672 591V598h1V591zM673 593V598h1V593zM674 593V598h1V593zM675 591V598h1V591zM676 591V598h1V591zM677 593V598h1V593zM678 591V598h1V591zM679 591V598h1V591zM680 591V598h1V591zM681 593V598h1V593zM682 593V595h1V593zM683 591V598h1V591zM684 591V598h1V591zM685 591V598h1V591zM686 591V598h1V591zM687 591V598h1V591zM688 591V595h1V591zM689 593V595h1V593zM690 591V598h1V591zM691 591V598h1V591zM692 591V598h1V591zM693 591V595h1V591zM694 591V595h1V591zM695 593V598h1V593zM696 593V598h1V593zM697 591V598h1V591zM698 591V598h1V591zM699 591V598h1V591zM700 591V598h1V591zM701 593V598h1V593zM702 593V598h1V593zM703 591V598h1V591zM704 593V598h1V593zM705 593V598h1V593zM706 591V598h1V591zM707 591V598h1V591zM708 593V598h1V593zM709 593V598h1V593zM710 591V598h1V591zM711 591V598h1V591zM712 591V598h1V591zM713 591V598h1V591zM714 593V595h1V593zM715 591V595h1V591zM716 591V598h1V591zM717 591V598h1V591zM718 593V598h1V593zM719 593V598h1V593zM720 591V595h1V591zM721 593V595h1V593zM722 591V595h1V591zM723 591V598h1V591zM724 593V598h1V593zM725 591V595h1V591zM726 591V595h1V591zM727 591V598h1V591zM728 591V598h1V591zM729 591V598h1V591zM730 591V598h1V591zM731 591V598h1V591zM732 591V598h1V591zM733 593V598h1V593zM734 591V598h1V591zM735 591V595h1V591zM736 591V595h1V591zM737 591V595h1V591zM738 591V598h1V591zM739 591V598h1V591zM740 591V598h1V591zM741 591V595h1V591zM742 591V598h1V591zM743 593V598h1V593zM744 591V598h1V591zM745 591V598h1V591zM746 591V598h1V591zM747 591V595h1V591zM748 591V595h1V591zM749 591V598h1V591zM750 591V598h1V591zM751 593V598h1V593zM752 593V598h1V593zM753 591V598h1V591zM754 591V598h1V591zM755 591V598h1V591zM756 591V595h1V591zM757 593V595h1V593zM758 591V595h1V591zM759 591V598h1V591zM760 591V598h1V591zM761 591V598h1V591zM762 591V598h1V591zM763 593V598h1V593zM764 593V598h1V593zM765 591V595h1V591zM766 591V595h1V591zM767 591V595h1V591zM768 591V598h1V591zM769 591V598h1V591zM770 591V598h1V591zM771 593V598h1V593zM772 593V595h1V593zM773 591V595h1V591zM774 589V595h1V589zM775 591V598h1V591zM776 593V598h1V593zM777 591V595h1V591zM778 591V595h1V591zM779 591V598h1V591zM780 591V598h1V591zM781 591V598h1V591zM782 591V598h1V591zM783 591V598h1V591zM784 591V598h1V591zM785 593V598h1V593zM786 593V595h1V593zM787 591V598h1V591zM788 591V598h1V591zM789 591V598h1V591zM790 591V598h1V591zM791 591V598h1V591zM792 591V598h1V591zM793 593V598h1V593zM794 591V598h1V591zM795 591V598h1V591zM796 591V595h1V591zM797 593V595h1V593zM798 591V595h1V591zM799 591V598h1V591zM800 591V598h1V591zM801 591V598h1V591zM802 591V598h1V591zM803 591V598h1V591zM804 589V598h1V589zM805 591V595h1V591zM806 591V595h1V591zM807 591V595h1V591zM808 591V598h1V591zM809 591V598h1V591zM810 591V598h1V591zM811 591V595h1V591zM812 591V598h1V591zM813 591V598h1V591zM814 591V598h1V591zM815 591V598h1V591zM816 593V598h1V593zM817 593V598h1V593zM818 591V598h1V591zM819 591V595h1V591zM820 591V595h1V591zM821 591V598h1V591zM822 591V598h1V591zM823 591V598h1V591zM824 591V595h1V591zM825 591V595h1V591zM826 591V595h1V591zM827 593V598h1V593zM828 593V598h1V593zM829 591V598h1V591zM830 591V598h1V591zM831 591V598h1V591zM832 593V598h1V593zM833 591V598h1V591zM834 591V595h1V591zM835 591V595h1V591zM836 591V598h1V591zM837 591V598h1V591zM838 591V598h1V591zM839 591V598h1V591zM840 591V598h1V591zM841 593V595h1V593zM842 591V598h1V591zM843 591V598h1V591zM844 589V598h1V589zM845 591V598h1V591zM846 591V595h1V591zM847 591V598h1V591zM848 591V598h1V591zM849 593V598h1V593zM850 591V598h1V591zM851 591V598h1V591zM852 593V595h1V593zM853 591V595h1V591zM854 589V595h1V589zM855 591V598h1V591zM856 591V598h1V591zM857 591V595h1V591zM858 591V598h1V591zM859 591V598h1V591zM860 593V598h1V593zM861 591V598h1V591zM862 593V595h1V593zM863 591V595h1V591zM864 591V598h1V591zM865 593V598h1V593zM866 593V598h1V593zM867 591V598h1V591zM868 591V598h1V591zM869 591V598h1V591zM870 591V595h1V591zM871 591V595h1V591zM872 593V598h1V593zM873 591V598h1V591zM874 593V598h1V593zM875 593V598h1V593zM876 591V598h1V591zM877 593V595h1V593zM878 589V598h1V589zM879 591V598h1V591zM880 591V598h1V591zM881 593V598h1V593zM882 593V598h1V593zM883 591V598h1V591zM884 591V598h1V591zM885 591V598h1V591zM886 591V598h1V591zM887 593V598h1V593zM888 591V595h1V591zM889 591V598h1V591zM890 591V598h1V591zM891 591V598h1V591zM892 593V598h1V593zM893 591V598h1V591zM894 591V598h1V591zM895 591V598h1V591zM896 593V595h1V593zM897 593V598h1V593zM898 591V598h1V591zM899 593V595h1V593zM900 591V595h1V591zM901 591V598h1V591zM902 591V598h1V591zM903 591V598h1V591zM904 591V598h1V591zM905 591V598h1V591zM906 591V595h1V591zM907 591V598h1V591zM908 591V598h1V591zM909 591V598h1V591zM910 593V598h1V593zM911 591V595h1V591zM912 591V598h1V591zM913 591V598h1V591zM914 591V598h1V591zM915 591V598h1V591zM916 591V598h1V591zM917 591V598h1V591zM918 593V598h1V593zM919 591V595h1V591zM920 593V595h1V593zM921 593V598h1V593zM922 591V598h1V591zM923 591V598h1V591zM924 591V598h1V591zM925 591V598h1V591zM926 591V598h1V591zM927 591V598h1V591zM928 593V595h1V593zM929 593V595h1V593zM930 591V595h1V591zM931 591V598h1V591zM932 591V598h1V591zM933 593V598h1V593zM934 591V598h1V591zM935 591V598h1V591zM936 591V595h1V591zM937 591V595h1V591zM938 591V598h1V591zM939 591V598h1V591zM940 589V598h1V589zM941 591V598h1V591zM942 591V598h1V591zM943 591V598h1V591zM944 591V598h1V591zM945 591V598h1V591zM946 591V598h1V591zM947 593V598h1V593zM948 593V598h1V593zM949 591V595h1V591zM950 591V595h1V591zM951 591V595h1V591zM952 591V598h1V591zM953 591V598h1V591zM954 593V598h1V593zM955 591V598h1V591zM956 591V598h1V591zM957 591V595h1V591zM958 593V595h1V593zM959 591V595h1V591zM960 591V598h1V591zM961 591V598h1V591zM962 591V598h1V591zM963 591V598h1V591zM964 591V598h1V591zM965 591V598h1V591zM966 591V598h1V591zM967 591V598h1V591zM968 591V598h1V591zM969 593V598h1V593zM970 591V598h1V591zM971 591V598h1V591zM972 591V598h1V591zM973 591V598h1V591zM974 591V595h1V591zM975 591V595h1V591zM976 591V598h1V591zM977 593V598h1V593zM978 591V598h1V591zM979 591V598h1V591zM980 591V598h1V591zM981 589V598h1V589zM982 591V598h1V591zM983 591V598h1V591zM984 591V598h1V591zM985 591V598h1V591zM986 591V598h1V591zM987 591V595h1V591zM988 591V598h1V591zM989 591V598h1V591zM990 591V598h1V591zM991 593V598h1V593zM992 593V595h1V593zM993 591V595h1V591zM994 591V598h1V591zM995 593V598h1V593zM996 591V598h1V591zM997 591V598h1V591zM998 591V598h1V591zM999 591V595h1V591zM1000 591V595h1V591zM1001 593V595h1V593zM1002 593V598h1V593zM1003 591V598h1V591zM1004 591V598h1V591zM1005 591V598h1V591zM1006 591V598h1V591zM1007 591V598h1V591zM1008 593V598h1V593zM1009 591V598h1V591zM1010 591V598h1V591zM1011 591V598h1V591zM1012 591V595h1V591zM1013 593V595h1V593zM1014 593V598h1V593zM1015 591V598h1V591zM1016 591V598h1V591zM1017 591V598h1V591zM1018 593V595h1V593zM1019 591V595h1V591zM1020 591V595h1V591zM518 650V663h1V650zM519 630V656h1V630zM520 612V633h1V612zM521 600V615h1V600zM522 594V602h1V594zM523 591V597h1V591zM524 590V598h1V590z"/>
<path fill="#f0f0f0" d="M21 30h1v1h-1zM21 43h1v1h-1zM21 56h1v1h-1zM21 69h1v1h-1zM21 95h1v1h-1zM21 108h1v1h-1zM21 121h1v1h-1zM21 134h1v1h-1zM21 160h1v1h-1zM21 173h1v1h-1zM21 186h1v1h-1zM21 199h1v1h-1zM21 225h1v1h-1zM21 238h1v1h-1zM21 251h1v1h-1zM21 264h1v1h-1zM21 290h1v1h-1zM21 303h1v1h-1zM21 316h1v1h-1zM21 329h1v1h-1zM21 339h1v1h-1zM21 341h1v1h-1zM21 342h1v1h-1zM21 343h1v1h-1zM21 345h1v1h-1zM21 355h1v1h-1zM21 368h1v1h-1zM21 381h1v1h-1zM21 394h1v1h-1zM21 420h1v1h-1zM21 433h1v1h-1zM21 446h1v1h-1zM21 459h1v1h-1zM21 485h1v1h-1zM21 498h1v1h-1zM21 511h1v1h-1zM21 524h1v1h-1zM21 550h1v1h-1zM21 563h1v1h-1zM21 576h1v1h-1zM21 589h1v1h-1zM21 615h1v1h-1zM21 628h1v1h-1zM21 641h1v1h-1zM21 654h1v1h-1zM22 82h1v1h-1zM22 147h1v1h-1zM22 212h1v1h-1zM22 277h1v1h-1zM22 342h1v1h-1zM22 407h1v1h-1zM22 472h1v1h-1zM22 537h1v1h-1zM22 602h1v1h-1zM23 30h1v1h-1zM23 43h1v1h-1zM23 56h1v1h-1zM23 69h1v1h-1zM23 95h1v1h-1zM23 108h1v1h-1zM23 121h1v1h-1zM23 134h1v1h-1zM23 160h1v1h-1zM23 173h1v1h-1zM23 186h1v1h-1zM23 199h1v1h-1zM23 225h1v1h-1zM23 238h1v1h-1zM23 251h1v1h-1zM23 264h1v1h-1zM23 290h1v1h-1zM23 303h1v1h-1zM23 316h1v1h-1zM23 329h1v1h-1zM23 342h1v1h-1zM23 355h1v1h-1zM23 368h1v1h-1zM23 381h1v1h-1zM23 394h1v1h-1zM23 420h1v1h-1zM23 433h1v1h-1zM23 446h1v1h-1zM23 459h1v1h-1zM23 485h1v1h-1zM23 498h1v1h-1zM23 511h1v1h-1zM23 524h1v1h-1zM23 550h1v1h-1zM23 563h1v1h-1zM23 576h1v1h-1zM23 589h1v1h-1zM23 615h1v1h-1zM23 628h1v1h-1zM23 641h1v1h-1zM23 654h1v1h-1zM24 82h1v1h-1zM24 147h1v1h-1zM24 212h1v1h-1zM24 277h1v1h-1zM24 342h1v1h-1zM24 407h1v1h-1zM24 472h1v1h-1zM24 537h1v1h-1zM24 602h1v1h-1zM25 342h1v1h-1zM26 82h1v1h-1zM26 147h1v1h-1zM26 212h1v1h-1zM26 277h1v1h-1zM26 342h1v1h-1zM26 407h1v1h-1zM26 472h1v1h-1zM26 537h1v1h-1zM26 602h1v1h-1zM27 342h1v1h-1zM29 342h1v1h-1zM31 342h1v1h-1zM33 342h1v1h-1zM35 342h1v1h-1zM37 342h1v1h-1zM39 342h1v1h-1zM41 17h1v1h-1zM41 19h1v1h-1zM41 82h1v1h-1zM41 147h1v1h-1zM41 212h1v1h-1zM41 277h1v1h-1zM41 339h1v1h-1zM41 341h1v1h-1zM41 342h1v1h-1zM41 343h1v1h-1zM41 345h1v1h-1zM41 407h1v1h-1zM41 472h1v1h-1zM41 537h1v1h-1zM41 602h1v1h-1zM41 665h1v1h-1zM41 667h1v1h-1zM43 342h1v1h-1zM45 342h1v1h-1zM47 342h1v1h-1zM49 342h1v1h-1zM51 342h1v1h-1zM53 342h1v1h-1zM55 342h1v1h-1zM57 342h1v1h-1zM59 342h1v1h-1zM61 17h1v1h-1zM61 19h1v1h-1zM61 82h1v1h-1zM61 147h1v1h-1zM61 212h1v1h-1zM61 277h1v1h-1zM61 339h1v1h-1zM61 341h1v1h-1zM61 342h1v1h-1zM61 343h1v1h-1zM61 345h1v1h-1zM61 407h1v1h-1zM61 472h1v1h-1zM61 537h1v1h-1zM61 602h1v1h-1zM61 665h1v1h-1zM61 667h1v1h-1zM63 342h1v1h-1zM65 342h1v1h-1zM67 342h1v1h-1zM69 342h1v1h-1zM71 342h1v1h-1zM73 342h1v1h-1zM75 342h1v1h-1zM77 342h1v1h-1zM79 342h1v1h-1zM81 17h1v1h-1zM81 19h1v1h-1zM81 82h1v1h-1zM81 147h1v1h-1zM81 212h1v1h-1zM81 277h1v1h-1zM81 339h1v1h-1zM81 341h1v1h-1zM81 342h1v1h-1zM81 343h1v1h-1zM81 345h1v1h-1zM81 407h1v1h-1zM81 472h1v1h-1zM81 537h1v1h-1zM81 602h1v1h-1zM81 665h1v1h-1zM81 667h1v1h-1zM83 342h1v1h-1zM85 342h1v1h-1zM87 342h1v1h-1zM89 342h1v1h-1zM91 342h1v1h-1zM93 342h1v1h-1zM95 342h1v1h-1zM97 342h1v1h-1zM99 342h1v1h-1zM101 17h1v1h-1zM101 19h1v1h-1zM101 82h1v1h-1zM101 147h1v1h-1zM101 212h1v1h-1zM101 277h1v1h-1zM101 339h1v1h-1zM101 341h1v1h-1zM101 342h1v1h-1zM101 343h1v1h-1zM101 345h1v1h-1zM101 407h1v1h-1zM101 472h1v1h-1zM101 537h1v1h-1zM101 602h1v1h-1zM101 665h1v1h-1zM101 667h1v1h-1zM103 342h1v1h-1zM105 342h1v1h-1zM107 342h1v1h-1zM109 342h1v1h-1zM111 342h1v1h-1zM113 342h1v1h-1zM115 342h1v1h-1zM117 342h1v1h-1zM119 342h1v1h-1zM121 18h1v1h-1zM121 20h1v1h-1zM121 22h1v1h-1zM121 30h1v1h-1zM121 43h1v1h-1zM121 56h1v1h-1zM121 69h1v1h-1zM121 82h1v1h-1zM121 95h1v1h-1zM121 108h1v1h-1zM121 121h1v1h-1zM121 134h1v1h-1zM121 147h1v1h-1zM121 160h1v1h-1zM121 173h1v1h-1zM121 186h1v1h-1zM121 199h1v1h-1zM121 212h1v1h-1zM121 225h1v1h-1zM121 238h1v1h-1zM121 251h1v1h-1zM121 264h1v1h-1zM121 277h1v1h-1zM121 290h1v1h-1zM121 303h1v1h-1zM121 316h1v1h-1zM121 329h1v1h-1zM121 336h1v1h-1zM121 338h1v1h-1zM121 339h1v1h-1zM121 340h1v1h-1zM121 341h1v1h-1zM121 342h1v1h-1zM121 343h1v1h-1zM121 344h1v1h-1zM121 345h1v1h-1zM121 346h1v1h-1zM121 348h1v1h-1zM121 355h1v1h-1zM121 368h1v1h-1zM121 381h1v1h-1zM121 394h1v1h-1zM121 407h1v1h-1zM121 420h1v1h-1zM121 433h1v1h-1zM121 446h1v1h-1zM121 459h1v1h-1zM121 472h1v1h-1zM121 485h1v1h-1zM121 498h1v1h-1zM121 511h1v1h-1zM121 524h1v1h-1zM121 537h1v1h-1zM121 550h1v1h-1zM121 563h1v1h-1zM121 576h1v1h-1zM121 589h1v1h-1zM121 602h1v1h-1zM121 615h1v1h-1zM121 628h1v1h-1zM121 641h1v1h-1zM121 654h1v1h-1zM121 662h1v1h-1zM121 664h1v1h-1zM121 666h1v1h-1zM123 342h1v1h-1zM125 342h1v1h-1zM127 342h1v1h-1zM129 342h1v1h-1zM131 342h1v1h-1zM133 342h1v1h-1zM135 342h1v1h-1zM137 342h1v1h-1zM139 342h1v1h-1zM141 17h1v1h-1zM141 19h1v1h-1zM141 82h1v1h-1zM141 147h1v1h-1zM141 212h1v1h-1zM141 277h1v1h-1zM141 339h1v1h-1zM141 341h1v1h-1zM141 342h1v1h-1zM141 343h1v1h-1zM141 345h1v1h-1zM141 407h1v1h-1zM141 472h1v1h-1zM141 537h1v1h-1zM141 602h1v1h-1zM141 665h1v1h-1zM141 667h1v1h-1zM143 342h1v1h-1zM145 342h1v1h-1zM147 342h1v1h-1zM149 342h1v1h-1zM151 342h1v1h-1zM153 342h1v1h-1zM155 342h1v1h-1zM157 342h1v1h-1zM159 342h1v1h-1zM161 17h1v1h-1zM161 19h1v1h-1zM161 82h1v1h-1zM161 147h1v1h-1zM161 212h1v1h-1zM161 277h1v1h-1zM161 339h1v1h-1zM161 341h1v1h-1zM161 342h1v1h-1zM161 343h1v1h-1zM161 345h1v1h-1zM161 407h1v1h-1zM161 472h1v1h-1zM161 537h1v1h-1zM161 602h1v1h-1zM161 665h1v1h-1zM161 667h1v1h-1zM163 342h1v1h-1zM165 342h1v1h-1zM167 342h1v1h-1zM169 342h1v1h-1zM171 342h1v1h-1zM173 342h1v1h-1zM175 342h1v1h-1zM177 342h1v1h-1zM179 342h1v1h-1zM181 17h1v1h-1zM181 19h1v1h-1zM181 82h1v1h-1zM181 147h1v1h-1zM181 212h1v1h-1zM181 277h1v1h-1zM181 339h1v1h-1zM181 341h1v1h-1zM181 342h1v1h-1zM181 343h1v1h-1zM181 345h1v1h-1zM181 407h1v1h-1zM181 472h1v1h-1zM181 537h1v1h-1zM181 602h1v1h-1zM181 665h1v1h-1zM181 667h1v1h-1zM183 342h1v1h-1zM185 342h1v1h-1zM187 342h1v1h-1zM189 342h1v1h-1zM191 342h1v1h-1zM193 342h1v1h-1zM195 342h1v1h-1zM197 342h1v1h-1zM199 342h1v1h-1zM201 17h1v1h-1zM201 19h1v1h-1zM201 82h1v1h-1zM201 147h1v1h-1zM201 212h1v1h-1zM201 277h1v1h-1zM201 339h1v1h-1zM201 341h1v1h-1zM201 342h1v1h-1zM201 343h1v1h-1zM201 345h1v1h-1zM201 407h1v1h-1zM201 472h1v1h-1zM201 537h1v1h-1zM201 602h1v1h-1zM201 665h1v1h-1zM201 667h1v1h-1zM203 342h1v1h-1zM205 342h1v1h-1zM207 342h1v1h-1zM209 342h1v1h-1zM211 342h1v1h-1zM213 342h1v1h-1zM215 342h1v1h-1zM217 342h1v1h-1zM219 342h1v1h-1zM221 18h1v1h-1zM221 20h1v1h-1zM221 22h1v1h-1zM221 30h1v1h-1zM221 43h1v1h-1zM221 56h1v1h-1zM221 69h1v1h-1zM221 82h1v1h-1zM221 95h1v1h-1zM221 108h1v1h-1zM221 121h1v1h-1zM221 134h1v1h-1zM221 147h1v1h-1zM221 160h1v1h-1zM221 173h1v1h-1zM221 186h1v1h-1zM221 199h1v1h-1zM221 212h1v1h-1zM221 225h1v1h-1zM221 238h1v1h-1zM221 251h1v1h-1zM221 264h1v1h-1zM221 277h1v1h-1zM221 290h1v1h-1zM221 303h1v1h-1zM221 316h1v1h-1zM221 329h1v1h-1zM221 336h1v1h-1zM221 338h1v1h-1zM221 339h1v1h-1zM221 340h1v1h-1zM221 341h1v1h-1zM221 342h1v1h-1zM221 343h1v1h-1zM221 344h1v1h-1zM221 345h1v1h-1zM221 346h1v1h-1zM221 348h1v1h-1zM221 355h1v1h-1zM221 368h1v1h-1zM221 381h1v1h-1zM221 394h1v1h-1zM221 407h1v1h-1zM221 420h1v1h-1zM221 433h1v1h-1zM221 446h1v1h-1zM221 459h1v1h-1zM221 472h1v1h-1zM221 485h1v1h-1zM221 498h1v1h-1zM221 511h1v1h-1zM221 524h1v1h-1zM221 537h1v1h-1zM221 550h1v1h-1zM221 563h1v1h-1zM221 576h1v1h-1zM221 589h1v1h-1zM221 602h1v1h-1zM221 615h1v1h-1zM221 628h1v1h-1zM221 641h1v1h-1zM221 654h1v1h-1zM221 662h1v1h-1zM221 664h1v1h-1zM221 666h1v1h-1zM223 342h1v1h-1zM225 342h1v1h-1zM227 342h1v1h-1zM229 342h1v1h-1zM231 342h1v1h-1zM233 342h1v1h-1zM235 342h1v1h-1zM237 342h1v1h-1zM239 342h1v1h-1zM241 17h1v1h-1zM241 19h1v1h-1zM241 82h1v1h-1zM241 147h1v1h-1zM241 212h1v1h-1zM241 277h1v1h-1zM241 339h1v1h-1zM241 341h1v1h-1zM241 342h1v1h-1zM241 343h1v1h-1zM241 345h1v1h-1zM241 407h1v1h-1zM241 472h1v1h-1zM241 537h1v1h-1zM241 602h1v1h-1zM241 665h1v1h-1zM241 667h1v1h-1zM243 342h1v1h-1zM245 342h1v1h-1zM247 342h1v1h-1zM249 342h1v1h-1zM251 342h1v1h-1zM253 342h1v1h-1zM255 342h1v1h-1zM257 342h1v1h-1zM259 342h1v1h-1zM261 17h1v1h-1zM261 19h1v1h-1zM261 82h1v1h-1zM261 147h1v1h-1zM261 212h1v1h-1zM261 277h1v1h-1zM261 339h1v1h-1zM261 341h1v1h-1zM261 342h1v1h-1zM261 343h1v1h-1zM261 345h1v1h-1zM261 407h1v1h-1zM261 472h1v1h-1zM261 537h1v1h-1zM261 602h1v1h-1zM261 665h1v1h-1zM261 667h1v1h-1zM263 342h1v1h-1zM265 342h1v1h-1zM267 342h1v1h-1zM269 342h1v1h-1zM271 342h1v1h-1zM273 342h1v1h-1zM275 342h1v1h-1zM277 342h1v1h-1zM279 342h1v1h-1zM281 17h1v1h-1zM281 19h1v1h-1zM281 82h1v1h-1zM281 147h1v1h-1zM281 212h1v1h-1zM281 277h1v1h-1zM281 339h1v1h-1zM281 341h1v1h-1zM281 342h1v1h-1zM281 343h1v1h-1zM281 345h1v1h-1zM281 407h1v1h-1zM281 472h1v1h-1zM281 537h1v1h-1zM281 602h1v1h-1zM281 665h1v1h-1zM281 667h1v1h-1zM283 342h1v1h-1zM285 342h1v1h-1zM287 342h1v1h-1zM289 342h1v1h-1zM291 342h1v1h-1zM293 342h1v1h-1zM295 342h1v1h-1zM297 342h1v1h-1zM299 342h1v1h-1zM301 17h1v1h-1zM301 19h1v1h-1zM301 82h1v1h-1zM301 147h1v1h-1zM301 212h1v1h-1zM301 277h1v1h-1zM301 339h1v1h-1zM301 341h1v1h-1zM301 342h1v1h-1zM301 343h1v1h-1zM301 345h1v1h-1zM301 407h1v1h-1zM301 472h1v1h-1zM301 537h1v1h-1zM301 602h1v1h-1zM301 665h1v1h-1zM301 667h1v1h-1zM303 342h1v1h-1zM305 342h1v1h-1zM307 342h1v1h-1zM309 342h1v1h-1zM311 342h1v1h-1zM313 342h1v1h-1zM315 342h1v1h-1zM317 342h1v1h-1zM319 342h1v1h-1zM321 18h1v1h-1zM321 20h1v1h-1zM321 22h1v1h-1zM321 30h1v1h-1zM321 43h1v1h-1zM321 56h1v1h-1zM321 69h1v1h-1zM321 82h1v1h-1zM321 95h1v1h-1zM321 108h1v1h-1zM321 121h1v1h-1zM321 134h1v1h-1zM321 147h1v1h-1zM321 160h1v1h-1zM321 173h1v1h-1zM321 186h1v1h-1zM321 199h1v1h-1zM321 212h1v1h-1zM321 225h1v1h-1zM321 238h1v1h-1zM321 251h1v1h-1zM321 264h1v1h-1zM321 277h1v1h-1zM321 290h1v1h-1zM321 303h1v1h-1zM321 316h1v1h-1zM321 329h1v1h-1zM321 336h1v1h-1zM321 338h1v1h-1zM321 339h1v1h-1zM321 340h1v1h-1zM321 341h1v1h-1zM321 342h1v1h-1zM321 343h1v1h-1zM321 344h1v1h-1zM321 345h1v1h-1zM321 346h1v1h-1zM321 348h1v1h-1zM321 355h1v1h-1zM321 368h1v1h-1zM321 381h1v1h-1zM321 394h1v1h-1zM321 407h1v1h-1zM321 420h1v1h-1zM321 433h1v1h-1zM321 446h1v1h-1zM321 459h1v1h-1zM321 472h1v1h-1zM321 485h1v1h-1zM321 498h1v1h-1zM321 511h1v1h-1zM321 524h1v1h-1zM321 537h1v1h-1zM321 550h1v1h-1zM321 563h1v1h-1zM321 576h1v1h-1zM321 589h1v1h-1zM321 602h1v1h-1zM321 615h1v1h-1zM321 628h1v1h-1zM321 641h1v1h-1zM321 654h1v1h-1zM321 662h1v1h-1zM321 664h1v1h-1zM321 666h1v1h-1zM323 342h1v1h-1zM325 342h1v1h-1zM327 342h1v1h-1zM329 342h1v1h-1zM331 342h1v1h-1zM333 342h1v1h-1zM335 342h1v1h-1zM337 342h1v1h-1zM339 342h1v1h-1zM341 17h1v1h-1zM341 19h1v1h-1zM341 82h1v1h-1zM341 147h1v1h-1zM341 212h1v1h-1zM341 277h1v1h-1zM341 339h1v1h-1zM341 341h1v1h-1zM341 342h1v1h-1zM341 343h1v1h-1zM341 345h1v1h-1zM341 407h1v1h-1zM341 472h1v1h-1zM341 537h1v1h-1zM341 602h1v1h-1zM341 665h1v1h-1zM341 667h1v1h-1zM343 342h1v1h-1zM345 342h1v1h-1zM347 342h1v1h-1zM349 342h1v1h-1zM351 342h1v1h-1zM353 342h1v1h-1zM355 342h1v1h-1zM357 342h1v1h-1zM359 342h1v1h-1zM361 17h1v1h-1zM361 19h1v1h-1zM361 82h1v1h-1zM361 147h1v1h-1zM361 212h1v1h-1zM361 277h1v1h-1zM361 339h1v1h-1zM361 341h1v1h-1zM361 342h1v1h-1zM361 343h1v1h-1zM361 345h1v1h-1zM361 407h1v1h-1zM361 472h1v1h-1zM361 537h1v1h-1zM361 602h1v1h-1zM361 665h1v1h-1zM361 667h1v1h-1zM363 342h1v1h-1zM365 342h1v1h-1zM367 342h1v1h-1zM369 342h1v1h-1zM371 342h1v1h-1zM373 342h1v1h-1zM375 342h1v1h-1zM377 342h1v1h-1zM379 342h1v1h-1zM381 17h1v1h-1zM381 19h1v1h-1zM381 82h1v1h-1zM381 147h1v1h-1zM381 212h1v1h-1zM381 277h1v1h-1zM381 339h1v1h-1zM381 341h1v1h-1zM381 342h1v1h-1zM381 343h1v1h-1zM381 345h1v1h-1zM381 407h1v1h-1zM381 472h1v1h-1zM381 537h1v1h-1zM381 602h1v1h-1zM381 665h1v1h-1zM381 667h1v1h-1zM383 342h1v1h-1zM385 342h1v1h-1zM387 342h1v1h-1zM389 342h1v1h-1zM391 342h1v1h-1zM393 342h1v1h-1zM395 342h1v1h-1zM397 342h1v1h-1zM399 342h1v1h-1zM401 17h1v1h-1zM401 19h1v1h-1zM401 82h1v1h-1zM401 147h1v1h-1zM401 212h1v1h-1zM401 277h1v1h-1zM401 339h1v1h-1zM401 341h1v1h-1zM401 342h1v1h-1zM401 343h1v1h-1zM401 345h1v1h-1zM401 407h1v1h-1zM401 472h1v1h-1zM401 537h1v1h-1zM401 602h1v1h-1zM401 665h1v1h-1zM401 667h1v1h-1zM403 342h1v1h-1zM405 342h1v1h-1zM407 342h1v1h-1zM409 342h1v1h-1zM411 342h1v1h-1zM413 342h1v1h-1zM415 342h1v1h-1zM417 342h1v1h-1zM419 342h1v1h-1zM421 18h1v1h-1zM421 20h1v1h-1zM421 22h1v1h-1zM421 30h1v1h-1zM421 43h1v1h-1zM421 56h1v1h-1zM421 69h1v1h-1zM421 82h1v1h-1zM421 95h1v1h-1zM421 108h1v1h-1zM421 121h1v1h-1zM421 134h1v1h-1zM421 147h1v1h-1zM421 160h1v1h-1zM421 173h1v1h-1zM421 186h1v1h-1zM421 199h1v1h-1zM421 212h1v1h-1zM421 225h1v1h-1zM421 238h1v1h-1zM421 251h1v1h-1zM421 264h1v1h-1zM421 277h1v1h-1zM421 290h1v1h-1zM421 303h1v1h-1zM421 316h1v1h-1zM421 329h1v1h-1zM421 336h1v1h-1zM421 338h1v1h-1zM421 339h1v1h-1zM421 340h1v1h-1zM421 341h1v1h-1zM421 342h1v1h-1zM421 343h1v1h-1zM421 344h1v1h-1zM421 345h1v1h-1zM421 346h1v1h-1zM421 348h1v1h-1zM421 355h1v1h-1zM421 368h1v1h-1zM421 381h1v1h-1zM421 394h1v1h-1zM421 407h1v1h-1zM421 420h1v1h-1zM421 433h1v1h-1zM421 446h1v1h-1zM421 459h1v1h-1zM421 472h1v1h-1zM421 485h1v1h-1zM421 498h1v1h-1zM421 511h1v1h-1zM421 524h1v1h-1zM421 537h1v1h-1zM421 550h1v1h-1zM421 563h1v1h-1zM421 576h1v1h-1zM421 589h1v1h-1zM421 602h1v1h-1zM421 615h1v1h-1zM421 628h1v1h-1zM421 641h1v1h-1zM421 654h1v1h-1zM421 662h1v1h-1zM421 664h1v1h-1zM421 666h1v1h-1zM423 342h1v1h-1zM425 342h1v1h-1zM427 342h1v1h-1zM429 342h1v1h-1zM431 342h1v1h-1zM433 342h1v1h-1zM435 342h1v1h-1zM437 342h1v1h-1zM439 342h1v1h-1zM441 17h1v1h-1zM441 19h1v1h-1zM441 82h1v1h-1zM441 147h1v1h-1zM441 212h1v1h-1zM441 277h1v1h-1zM441 339h1v1h-1zM441 341h1v1h-1zM441 342h1v1h-1zM441 343h1v1h-1zM441 345h1v1h-1zM441 407h1v1h-1zM441 472h1v1h-1zM441 537h1v1h-1zM441 602h1v1h-1zM441 665h1v1h-1zM441 667h1v1h-1zM443 342h1v1h-1zM445 342h1v1h-1zM447 342h1v1h-1zM449 342h1v1h-1zM451 342h1v1h-1zM453 342h1v1h-1zM455 342h1v1h-1zM457 342h1v1h-1zM459 342h1v1h-1zM461 17h1v1h-1zM461 19h1v1h-1zM461 82h1v1h-1zM461 147h1v1h-1zM461 212h1v1h-1zM461 277h1v1h-1zM461 339h1v1h-1zM461 341h1v1h-1zM461 342h1v1h-1zM461 343h1v1h-1zM461 345h1v1h-1zM461 407h1v1h-1zM461 472h1v1h-1zM461 537h1v1h-1zM461 602h1v1h-1zM461 665h1v1h-1zM461 667h1v1h-1zM463 342h1v1h-1zM465 342h1v1h-1zM467 342h1v1h-1zM469 342h1v1h-1zM471 342h1v1h-1zM473 342h1v1h-1zM475 342h1v1h-1zM477 342h1v1h-1zM479 342h1v1h-1zM481 17h1v1h-1zM481 19h1v1h-1zM481 82h1v1h-1zM481 147h1v1h-1zM481 212h1v1h-1zM481 277h1v1h-1zM481 339h1v1h-1zM481 341h1v1h-1zM481 342h1v1h-1zM481 343h1v1h-1zM481 345h1v1h-1zM481 407h1v1h-1zM481 472h1v1h-1zM481 537h1v1h-1zM481 602h1v1h-1zM481 665h1v1h-1zM481 667h1v1h-1zM483 342h1v1h-1zM485 342h1v1h-1zM487 342h1v1h-1zM489 342h1v1h-1zM491 342h1v1h-1zM493 342h1v1h-1zM495 342h1v1h-1zM497 342h1v1h-1zM499 342h1v1h-1zM501 17h1v1h-1zM501 19h1v1h-1zM501 82h1v1h-1zM501 147h1v1h-1zM501 212h1v1h-1zM501 277h1v1h-1zM501 339h1v1h-1zM501 341h1v1h-1zM501 342h1v1h-1zM501 343h1v1h-1zM501 345h1v1h-1zM501 407h1v1h-1zM501 472h1v1h-1zM501 537h1v1h-1zM501 602h1v1h-1zM501 665h1v1h-1zM501 667h1v1h-1zM503 342h1v1h-1zM505 342h1v1h-1zM507 342h1v1h-1zM509 342h1v1h-1zM511 342h1v1h-1zM513 342h1v1h-1zM515 82h1v1h-1zM515 147h1v1h-1zM515 212h1v1h-1zM515 277h1v1h-1zM515 342h1v1h-1zM515 407h1v1h-1zM515 472h1v1h-1zM515 537h1v1h-1zM515 602h1v1h-1zM517 82h1v1h-1zM517 147h1v1h-1zM517 212h1v1h-1zM517 277h1v1h-1zM517 342h1v1h-1zM517 407h1v1h-1zM517 472h1v1h-1zM517 537h1v1h-1zM517 602h1v1h-1zM518 17h1v1h-1zM518 30h1v1h-1zM518 43h1v1h-1zM518 56h1v1h-1zM518 69h1v1h-1zM518 82h1v1h-1zM518 95h1v1h-1zM518 108h1v1h-1zM518 121h1v1h-1zM518 134h1v1h-1zM518 147h1v1h-1zM518 160h1v1h-1zM518 173h1v1h-1zM518 186h1v1h-1zM518 199h1v1h-1zM518 212h1v1h-1zM518 225h1v1h-1zM518 238h1v1h-1zM518 251h1v1h-1zM518 264h1v1h-1zM518 277h1v1h-1zM518 290h1v1h-1zM518 303h1v1h-1zM518 316h1v1h-1zM518 329h1v1h-1zM518 355h1v1h-1zM518 368h1v1h-1zM518 381h1v1h-1zM518 394h1v1h-1zM518 407h1v1h-1zM518 420h1v1h-1zM518 433h1v1h-1zM518 446h1v1h-1zM518 459h1v1h-1zM518 472h1v1h-1zM518 485h1v1h-1zM518 498h1v1h-1zM518 511h1v1h-1zM518 524h1v1h-1zM518 537h1v1h-1zM518 550h1v1h-1zM518 563h1v1h-1zM518 576h1v1h-1zM518 589h1v1h-1zM518 602h1v1h-1zM518 615h1v1h-1zM518 628h1v1h-1zM518 641h1v1h-1zM518 654h1v1h-1zM518 667h1v1h-1zM519 82h1v1h-1zM519 147h1v1h-1zM519 212h1v1h-1zM519 277h1v1h-1zM519 342h1v1h-1zM519 407h1v1h-1zM519 472h1v1h-1zM519 537h1v1h-1zM519 602h1v1h-1zM520 17h1v1h-1zM520 30h1v1h-1zM520 43h1v1h-1zM520 56h1v1h-1zM520 69h1v1h-1zM520 82h1v1h-1zM520 95h1v1h-1zM520 108h1v1h-1zM520 121h1v1h-1zM520 134h1v1h-1zM520 147h1v1h-1zM520 160h1v1h-1zM520 173h1v1h-1zM520 186h1v1h-1zM520 199h1v1h-1zM520 212h1v1h-1zM520 225h1v1h-1zM520 238h1v1h-1zM520 251h1v1h-1zM520 264h1v1h-1zM520 277h1v1h-1zM520 290h1v1h-1zM520 303h1v1h-1zM520 316h1v1h-1zM520 329h1v1h-1zM520 355h1v1h-1zM520 368h1v1h-1zM520 381h1v1h-1zM520 394h1v1h-1zM520 407h1v1h-1zM520 420h1v1h-1zM520 433h1v1h-1zM520 446h1v1h-1zM520 459h1v1h-1zM520 472h1v1h-1zM520 485h1v1h-1zM520 498h1v1h-1zM520 511h1v1h-1zM520 524h1v1h-1zM520 537h1v1h-1zM520 550h1v1h-1zM520 563h1v1h-1zM520 576h1v1h-1zM520 589h1v1h-1zM520 602h1v1h-1zM520 615h1v1h-1zM520 628h1v1h-1zM520 641h1v1h-1zM520 654h1v1h-1zM520 667h1v1h-1zM521 17h1v1h-1zM521 18h1v1h-1zM521 20h1v1h-1zM521 22h1v1h-1zM521 24h1v1h-1zM521 26h1v1h-1zM521 28h1v1h-1zM521 29h1v1h-1zM521 30h1v1h-1zM521 31h1v1h-1zM521 32h1v1h-1zM521 34h1v1h-1zM521 36h1v1h-1zM521 38h1v1h-1zM521 40h1v1h-1zM521 42h1v1h-1zM521 43h1v1h-1zM521 44h1v1h-1zM521 46h1v1h-1zM521 48h1v1h-1zM521 50h1v1h-1zM521 52h1v1h-1zM521 54h1v1h-1zM521 55h1v1h-1zM521 56h1v1h-1zM521 57h1v1h-1zM521 58h1v1h-1zM521 60h1v1h-1zM521 62h1v1h-1zM521 64h1v1h-1zM521 66h1v1h-1zM521 68h1v1h-1zM521 69h1v1h-1zM521 70h1v1h-1zM521 72h1v1h-1zM521 74h1v1h-1zM521 76h1v1h-1zM521 78h1v1h-1zM521 80h1v1h-1zM521 81h1v1h-1zM521 82h1v1h-1zM521 83h1v1h-1zM521 84h1v1h-1zM521 86h1v1h-1zM521 88h1v1h-1zM521 90h1v1h-1zM521 92h1v1h-1zM521 94h1v1h-1zM521 95h1v1h-1zM521 96h1v1h-1zM521 98h1v1h-1zM521 100h1v1h-1zM521 102h1v1h-1zM521 104h1v1h-1zM521 106h1v1h-1zM521 107h1v1h-1zM521 108h1v1h-1zM521 109h1v1h-1zM521 110h1v1h-1zM521 112h1v1h-1zM521 114h1v1h-1zM521 116h1v1h-1zM521 118h1v1h-1zM521 120h1v1h-1zM521 121h1v1h-1zM521 122h1v1h-1zM521 124h1v1h-1zM521 126h1v1h-1zM521 128h1v1h-1zM521 130h1v1h-1zM521 132h1v1h-1zM521 133h1v1h-1zM521 134h1v1h-1zM521 135h1v1h-1zM521 136h1v1h-1zM521 138h1v1h-1zM521 140h1v1h-1zM521 142h1v1h-1zM521 144h1v1h-1zM521 146h1v1h-1zM521 147h1v1h-1zM521 148h1v1h-1zM521 150h1v1h-1zM521 152h1v1h-1zM521 154h1v1h-1zM521 156h1v1h-1zM521 158h1v1h-1zM521 159h1v1h-1zM521 160h1v1h-1zM521 161h1v1h-1zM521 162h1v1h-1zM521 164h1v1h-1zM521 166h1v1h-1zM521 168h1v1h-1zM521 170h1v1h-1zM521 172h1v1h-1zM521 173h1v1h-1zM521 174h1v1h-1zM521 176h1v1h-1zM521 178h1v1h-1zM521 180h1v1h-1zM521 182h1v1h-1zM521 184h1v1h-1zM521 185h1v1h-1zM521 186h1v1h-1zM521 187h1v1h-1zM521 188h1v1h-1zM521 190h1v1h-1zM521 192h1v1h-1zM521 194h1v1h-1zM521 196h1v1h-1zM521 198h1v1h-1zM521 199h1v1h-1zM521 200h1v1h-1zM521 202h1v1h-1zM521 204h1v1h-1zM521 206h1v1h-1zM521 208h1v1h-1zM521 210h1v1h-1zM521 211h1v1h-1zM521 212h1v1h-1zM521 213h1v1h-1zM521 214h1v1h-1zM521 216h1v1h-1zM521 218h1v1h-1zM521 220h1v1h-1zM521 222h1v1h-1zM521 224h1v1h-1zM521 225h1v1h-1zM521 226h1v1h-1zM521 228h1v1h-1zM521 230h1v1h-1zM521 232h1v1h-1zM521 234h1v1h-1zM521 236h1v1h-1zM521 237h1v1h-1zM521 238h1v1h-1zM521 239h1v1h-1zM521 240h1v1h-1zM521 242h1v1h-1zM521 244h1v1h-1zM521 246h1v1h-1zM521 248h1v1h-1zM521 250h1v1h-1zM521 251h1v1h-1zM521 252h1v1h-1zM521 254h1v1h-1zM521 256h1v1h-1zM521 258h1v1h-1zM521 260h1v1h-1zM521 262h1v1h-1zM521 263h1v1h-1zM521 264h1v1h-1zM521 265h1v1h-1zM521 266h1v1h-1zM521 268h1v1h-1zM521 270h1v1h-1zM521 272h1v1h-1zM521 274h1v1h-1zM521 276h1v1h-1zM521 277h1v1h-1zM521 278h1v1h-1zM521 280h1v1h-1zM521 282h1v1h-1zM521 284h1v1h-1zM521 286h1v1h-1zM521 288h1v1h-1zM521 289h1v1h-1zM521 290h1v1h-1zM521 291h1v1h-1zM521 292h1v1h-1zM521 294h1v1h-1zM521 296h1v1h-1zM521 298h1v1h-1zM521 300h1v1h-1zM521 302h1v1h-1zM521 303h1v1h-1zM521 304h1v1h-1zM521 306h1v1h-1zM521 308h1v1h-1zM521 310h1v1h-1zM521 312h1v1h-1zM521 314h1v1h-1zM521 315h1v1h-1zM521 316h1v1h-1zM521 317h1v1h-1zM521 318h1v1h-1zM521 320h1v1h-1zM521 322h1v1h-1zM521 324h1v1h-1zM521 326h1v1h-1zM521 328h1v1h-1zM521 329h1v1h-1zM521 330h1v1h-1zM521 332h1v1h-1zM521 334h1v1h-1zM521 336h1v1h-1zM521 338h1v1h-1zM521 340h1v1h-1zM521 342h1v1h-1zM521 344h1v1h-1zM521 346h1v1h-1zM521 348h1v1h-1zM521 350h1v1h-1zM521 352h1v1h-1zM521 354h1v1h-1zM521 355h1v1h-1zM521 356h1v1h-1zM521 358h1v1h-1zM521 360h1v1h-1zM521 362h1v1h-1zM521 364h1v1h-1zM521 366h1v1h-1zM521 367h1v1h-1zM521 368h1v1h-1zM521 369h1v1h-1zM521 370h1v1h-1zM521 372h1v1h-1zM521 374h1v1h-1zM521 376h1v1h-1zM521 378h1v1h-1zM521 380h1v1h-1zM521 381h1v1h-1zM521 382h1v1h-1zM521 384h1v1h-1zM521 386h1v1h-1zM521 388h1v1h-1zM521 390h1v1h-1zM521 392h1v1h-1zM521 393h1v1h-1zM521 394h1v1h-1zM521 395h1v1h-1zM521 396h1v1h-1zM521 398h1v1h-1zM521 400h1v1h-1zM521 402h1v1h-1zM521 404h1v1h-1zM521 406h1v1h-1zM521 407h1v1h-1zM521 408h1v1h-1zM521 410h1v1h-1zM521 412h1v1h-1zM521 414h1v1h-1zM521 416h1v1h-1zM521 418h1v1h-1zM521 419h1v1h-1zM521 420h1v1h-1zM521 421h1v1h-1zM521 422h1v1h-1zM521 424h1v1h-1zM521 426h1v1h-1zM521 428h1v1h-1zM521 430h1v1h-1zM521 432h1v1h-1zM521 433h1v1h-1zM521 434h1v1h-1zM521 436h1v1h-1zM521 438h1v1h-1zM521 440h1v1h-1zM521 442h1v1h-1zM521 444h1v1h-1zM521 445h1v1h-1zM521 446h1v1h-1zM521 447h1v1h-1zM521 448h1v1h-1zM521 450h1v1h-1zM521 452h1v1h-1zM521 454h1v1h-1zM521 456h1v1h-1zM521 458h1v1h-1zM521 459h1v1h-1zM521 460h1v1h-1zM521 462h1v1h-1zM521 464h1v1h-1zM521 466h1v1h-1zM521 468h1v1h-1zM521 470h1v1h-1zM521 471h1v1h-1zM521 472h1v1h-1zM521 473h1v1h-1zM521 474h1v1h-1zM521 476h1v1h-1zM521 478h1v1h-1zM521 480h1v1h-1zM521 482h1v1h-1zM521 484h1v1h-1zM521 485h1v1h-1zM521 486h1v1h-1zM521 488h1v1h-1zM521 490h1v1h-1zM521 492h1v1h-1zM521 494h1v1h-1zM521 496h1v1h-1zM521 497h1v1h-1zM521 498h1v1h-1zM521 499h1v1h-1zM521 500h1v1h-1zM521 502h1v1h-1zM521 504h1v1h-1zM521 506h1v1h-1zM521 508h1v1h-1zM521 510h1v1h-1zM521 511h1v1h-1zM521 512h1v1h-1zM521 514h1v1h-1zM521 516h1v1h-1zM521 518h1v1h-1zM521 520h1v1h-1zM521 522h1v1h-1zM521 523h1v1h-1zM521 524h1v1h-1zM521 525h1v1h-1zM521 526h1v1h-1zM521 528h1v1h-1zM521 530h1v1h-1zM521 532h1v1h-1zM521 534h1v1h-1zM521 536h1v1h-1zM521 537h1v1h-1zM521 538h1v1h-1zM521 540h1v1h-1zM521 542h1v1h-1zM521 544h1v1h-1zM521 546h1v1h-1zM521 548h1v1h-1zM521 549h1v1h-1zM521 550h1v1h-1zM521 551h1v1h-1zM521 552h1v1h-1zM521 554h1v1h-1zM521 556h1v1h-1zM521 558h1v1h-1zM521 560h1v1h-1zM521 562h1v1h-1zM521 563h1v1h-1zM521 564h1v1h-1zM521 566h1v1h-1zM521 568h1v1h-1zM521 570h1v1h-1zM521 572h1v1h-1zM521 574h1v1h-1zM521 575h1v1h-1zM521 576h1v1h-1zM521 577h1v1h-1zM521 578h1v1h-1zM521 580h1v1h-1zM521 582h1v1h-1zM521 584h1v1h-1zM521 586h1v1h-1zM521 588h1v1h-1zM521 589h1v1h-1zM521 590h1v1h-1zM521 592h1v1h-1zM521 594h1v1h-1zM521 596h1v1h-1zM521 598h1v1h-1zM521 600h1v1h-1zM521 601h1v1h-1zM521 602h1v1h-1zM521 603h1v1h-1zM521 604h1v1h-1zM521 606h1v1h-1zM521 608h1v1h-1zM521 610h1v1h-1zM521 612h1v1h-1zM521 614h1v1h-1zM521 615h1v1h-1zM521 616h1v1h-1zM521 618h1v1h-1zM521 620h1v1h-1zM521 622h1v1h-1zM521 624h1v1h-1zM521 626h1v1h-1zM521 627h1v1h-1zM521 628h1v1h-1zM521 629h1v1h-1zM521 630h1v1h-1zM521 632h1v1h-1zM521 634h1v1h-1zM521 636h1v1h-1zM521 638h1v1h-1zM521 640h1v1h-1zM521 641h1v1h-1zM521 642h1v1h-1zM521 644h1v1h-1zM521 646h1v1h-1zM521 648h1v1h-1zM521 650h1v1h-1zM521 652h1v1h-1zM521 653h1v1h-1zM521 654h1v1h-1zM521 655h1v1h-1zM521 656h1v1h-1zM521 658h1v1h-1zM521 660h1v1h-1zM521 662h1v1h-1zM521 664h1v1h-1zM521 666h1v1h-1zM521 667h1v1h-1zM522 17h1v1h-1zM522 30h1v1h-1zM522 43h1v1h-1zM522 56h1v1h-1zM522 69h1v1h-1zM522 82h1v1h-1zM522 95h1v1h-1zM522 108h1v1h-1zM522 121h1v1h-1zM522 134h1v1h-1zM522 147h1v1h-1zM522 160h1v1h-1zM522 173h1v1h-1zM522 186h1v1h-1zM522 199h1v1h-1zM522 212h1v1h-1zM522 225h1v1h-1zM522 238h1v1h-1zM522 251h1v1h-1zM522 264h1v1h-1zM522 277h1v1h-1zM522 290h1v1h-1zM522 303h1v1h-1zM522 316h1v1h-1zM522 329h1v1h-1zM522 355h1v1h-1zM522 368h1v1h-1zM522 381h1v1h-1zM522 394h1v1h-1zM522 407h1v1h-1zM522 420h1v1h-1zM522 433h1v1h-1zM522 446h1v1h-1zM522 459h1v1h-1zM522 472h1v1h-1zM522 485h1v1h-1zM522 498h1v1h-1zM522 511h1v1h-1zM522 524h1v1h-1zM522 537h1v1h-1zM522 550h1v1h-1zM522 563h1v1h-1zM522 576h1v1h-1zM522 589h1v1h-1zM522 602h1v1h-1zM522 615h1v1h-1zM522 628h1v1h-1zM522 641h1v1h-1zM522 654h1v1h-1zM522 667h1v1h-1zM523 82h1v1h-1zM523 147h1v1h-1zM523 212h1v1h-1zM523 277h1v1h-1zM523 342h1v1h-1zM523 407h1v1h-1zM523 472h1v1h-1zM523 537h1v1h-1zM523 602h1v1h-1zM524 17h1v1h-1zM524 30h1v1h-1zM524 43h1v1h-1zM524 56h1v1h-1zM524 69h1v1h-1zM524 82h1v1h-1zM524 95h1v1h-1zM524 108h1v1h-1zM524 121h1v1h-1zM524 134h1v1h-1zM524 147h1v1h-1zM524 160h1v1h-1zM524 173h1v1h-1zM524 186h1v1h-1zM524 199h1v1h-1zM524 212h1v1h-1zM524 225h1v1h-1zM524 238h1v1h-1zM524 251h1v1h-1zM524 264h1v1h-1zM524 277h1v1h-1zM524 290h1v1h-1zM524 303h1v1h-1zM524 316h1v1h-1zM524 329h1v1h-1zM524 355h1v1h-1zM524 368h1v1h-1zM524 381h1v1h-1zM524 394h1v1h-1zM524 407h1v1h-1zM524 420h1v1h-1zM524 433h1v1h-1zM524 446h1v1h-1zM524 459h1v1h-1zM524 472h1v1h-1zM524 485h1v1h-1zM524 498h1v1h-1zM524 511h1v1h-1zM524 524h1v1h-1zM524 537h1v1h-1zM524 550h1v1h-1zM524 563h1v1h-1zM524 576h1v1h-1zM524 589h1v1h-1zM524 602h1v1h-1zM524 615h1v1h-1zM524 628h1v1h-1zM524 641h1v1h-1zM524 654h1v1h-1zM524 667h1v1h-1zM525 82h1v1h-1zM525 147h1v1h-1zM525 212h1v1h-1zM525 277h1v1h-1zM525 342h1v1h-1zM525 407h1v1h-1zM525 472h1v1h-1zM525 537h1v1h-1zM525 602h1v1h-1zM527 82h1v1h-1zM527 147h1v1h-1zM527 212h1v1h-1zM527 277h1v1h-1zM527 342h1v1h-1zM527 407h1v1h-1zM527 472h1v1h-1zM527 537h1v1h-1zM527 602h1v1h-1zM529 342h1v1h-1zM531 342h1v1h-1zM533 342h1v1h-1zM535 342h1v1h-1zM537 342h1v1h-1zM539 342h1v1h-1zM541 17h1v1h-1zM541 19h1v1h-1zM541 82h1v1h-1zM541 147h1v1h-1zM541 212h1v1h-1zM541 277h1v1h-1zM541 339h1v1h-1zM541 341h1v1h-1zM541 342h1v1h-1zM541 343h1v1h-1zM541 345h1v1h-1zM541 407h1v1h-1zM541 472h1v1h-1zM541 537h1v1h-1zM541 602h1v1h-1zM541 665h1v1h-1zM541 667h1v1h-1zM543 342h1v1h-1zM545 342h1v1h-1zM547 342h1v1h-1zM549 342h1v1h-1zM551 342h1v1h-1zM553 342h1v1h-1zM555 342h1v1h-1zM557 342h1v1h-1zM559 342h1v1h-1zM561 17h1v1h-1zM561 19h1v1h-1zM561 82h1v1h-1zM561 147h1v1h-1zM561 212h1v1h-1zM561 277h1v1h-1zM561 339h1v1h-1zM561 341h1v1h-1zM561 342h1v1h-1zM561 343h1v1h-1zM561 345h1v1h-1zM561 407h1v1h-1zM561 472h1v1h-1zM561 537h1v1h-1zM561 602h1v1h-1zM561 665h1v1h-1zM561 667h1v1h-1zM563 342h1v1h-1zM565 342h1v1h-1zM567 342h1v1h-1zM569 342h1v1h-1zM571 342h1v1h-1zM573 342h1v1h-1zM575 342h1v1h-1zM577 342h1v1h-1zM579 342h1v1h-1zM581 17h1v1h-1zM581 19h1v1h-1zM581 82h1v1h-1zM581 147h1v1h-1zM581 212h1v1h-1zM581 277h1v1h-1zM581 339h1v1h-1zM581 341h1v1h-1zM581 342h1v1h-1zM581 343h1v1h-1zM581 345h1v1h-1zM581 407h1v1h-1zM581 472h1v1h-1zM581 537h1v1h-1zM581 602h1v1h-1zM581 665h1v1h-1zM581 667h1v1h-1zM583 342h1v1h-1zM585 342h1v1h-1zM587 342h1v1h-1zM589 342h1v1h-1zM591 342h1v1h-1zM593 342h1v1h-1zM595 342h1v1h-1zM597 342h1v1h-1zM599 342h1v1h-1zM601 17h1v1h-1zM601 19h1v1h-1zM601 82h1v1h-1zM601 147h1v1h-1zM601 212h1v1h-1zM601 277h1v1h-1zM601 339h1v1h-1zM601 341h1v1h-1zM601 342h1v1h-1zM601 343h1v1h-1zM601 345h1v1h-1zM601 407h1v1h-1zM601 472h1v1h-1zM601 537h1v1h-1zM601 602h1v1h-1zM601 665h1v1h-1zM601 667h1v1h-1zM603 342h1v1h-1zM605 342h1v1h-1zM607 342h1v1h-1zM609 342h1v1h-1zM611 342h1v1h-1zM613 342h1v1h-1zM615 342h1v1h-1zM617 342h1v1h-1zM619 342h1v1h-1zM621 18h1v1h-1zM621 20h1v1h-1zM621 22h1v1h-1zM621 30h1v1h-1zM621 43h1v1h-1zM621 56h1v1h-1zM621 69h1v1h-1zM621 82h1v1h-1zM621 95h1v1h-1zM621 108h1v1h-1zM621 121h1v1h-1zM621 134h1v1h-1zM621 147h1v1h-1zM621 160h1v1h-1zM621 173h1v1h-1zM621 186h1v1h-1zM621 199h1v1h-1zM621 212h1v1h-1zM621 225h1v1h-1zM621 238h1v1h-1zM621 251h1v1h-1zM621 264h1v1h-1zM621 277h1v1h-1zM621 290h1v1h-1zM621 303h1v1h-1zM621 316h1v1h-1zM621 329h1v1h-1zM621 336h1v1h-1zM621 338h1v1h-1zM621 339h1v1h-1zM621 340h1v1h-1zM621 341h1v1h-1zM621 342h1v1h-1zM621 343h1v1h-1zM621 344h1v1h-1zM621 345h1v1h-1zM621 346h1v1h-1zM621 348h1v1h-1zM621 355h1v1h-1zM621 368h1v1h-1zM621 381h1v1h-1zM621 394h1v1h-1zM621 407h1v1h-1zM621 420h1v1h-1zM621 433h1v1h-1zM621 446h1v1h-1zM621 459h1v1h-1zM621 472h1v1h-1zM621 485h1v1h-1zM621 498h1v1h-1zM621 511h1v1h-1zM621 524h1v1h-1zM621 537h1v1h-1zM621 550h1v1h-1zM621 563h1v1h-1zM621 576h1v1h-1zM621 589h1v1h-1zM621 602h1v1h-1zM621 615h1v1h-1zM621 628h1v1h-1zM621 641h1v1h-1zM621 654h1v1h-1zM621 662h1v1h-1zM621 664h1v1h-1zM621 666h1v1h-1zM623 342h1v1h-1zM625 342h1v1h-1zM627 342h1v1h-1zM629 342h1v1h-1zM631 342h1v1h-1zM633 342h1v1h-1zM635 342h1v1h-1zM637 342h1v1h-1zM639 342h1v1h-1zM641 17h1v1h-1zM641 19h1v1h-1zM641 82h1v1h-1zM641 147h1v1h-1zM641 212h1v1h-1zM641 277h1v1h-1zM641 339h1v1h-1zM641 341h1v1h-1zM641 342h1v1h-1zM641 343h1v1h-1zM641 345h1v1h-1zM641 407h1v1h-1zM641 472h1v1h-1zM641 537h1v1h-1zM641 602h1v1h-1zM641 665h1v1h-1zM641 667h1v1h-1zM643 342h1v1h-1zM645 342h1v1h-1zM647 342h1v1h-1zM649 342h1v1h-1zM651 342h1v1h-1zM653 342h1v1h-1zM655 342h1v1h-1zM657 342h1v1h-1zM659 342h1v1h-1zM661 17h1v1h-1zM661 19h1v1h-1zM661 82h1v1h-1zM661 147h1v1h-1zM661 212h1v1h-1zM661 277h1v1h-1zM661 339h1v1h-1zM661 341h1v1h-1zM661 342h1v1h-1zM661 343h1v1h-1zM661 345h1v1h-1zM661 407h1v1h-1zM661 472h1v1h-1zM661 537h1v1h-1zM661 602h1v1h-1zM661 665h1v1h-1zM661 667h1v1h-1zM663 342h1v1h-1zM665 342h1v1h-1zM667 342h1v1h-1zM669 342h1v1h-1zM671 342h1v1h-1zM673 342h1v1h-1zM675 342h1v1h-1zM677 342h1v1h-1zM679 342h1v1h-1zM681 17h1v1h-1zM681 19h1v1h-1zM681 82h1v1h-1zM681 147h1v1h-1zM681 212h1v1h-1zM681 277h1v1h-1zM681 339h1v1h-1zM681 341h1v1h-1zM681 342h1v1h-1zM681 343h1v1h-1zM681 345h1v1h-1zM681 407h1v1h-1zM681 472h1v1h-1zM681 537h1v1h-1zM681 602h1v1h-1zM681 665h1v1h-1zM681 667h1v1h-1zM683 342h1v1h-1zM685 342h1v1h-1zM687 342h1v1h-1zM689 342h1v1h-1zM691 342h1v1h-1zM693 342h1v1h-1zM695 342h1v1h-1zM697 342h1v1h-1zM699 342h1v1h-1zM701 17h1v1h-1zM701 19h1v1h-1zM701 82h1v1h-1zM701 147h1v1h-1zM701 212h1v1h-1zM701 277h1v1h-1zM701 339h1v1h-1zM701 341h1v1h-1zM701 342h1v1h-1zM701 343h1v1h-1zM701 345h1v1h-1zM701 407h1v1h-1zM701 472h1v1h-1zM701 537h1v1h-1zM701 602h1v1h-1zM701 665h1v1h-1zM701 667h1v1h-1zM703 342h1v1h-1zM705 342h1v1h-1zM707 342h1v1h-1zM709 342h1v1h-1zM711 342h1v1h-1zM713 342h1v1h-1zM715 342h1v1h-1zM717 342h1v1h-1zM719 342h1v1h-1zM721 18h1v1h-1zM721 20h1v1h-1zM721 22h1v1h-1zM721 30h1v1h-1zM721 43h1v1h-1zM721 56h1v1h-1zM721 69h1v1h-1zM721 82h1v1h-1zM721 95h1v1h-1zM721 108h1v1h-1zM721 121h1v1h-1zM721 134h1v1h-1zM721 147h1v1h-1zM721 160h1v1h-1zM721 173h1v1h-1zM721 186h1v1h-1zM721 199h1v1h-1zM721 212h1v1h-1zM721 225h1v1h-1zM721 238h1v1h-1zM721 251h1v1h-1zM721 264h1v1h-1zM721 277h1v1h-1zM721 290h1v1h-1zM721 303h1v1h-1zM721 316h1v1h-1zM721 329h1v1h-1zM721 336h1v1h-1zM721 338h1v1h-1zM721 339h1v1h-1zM721 340h1v1h-1zM721 341h1v1h-1zM721 342h1v1h-1zM721 343h1v1h-1zM721 344h1v1h-1zM721 345h1v1h-1zM721 346h1v1h-1zM721 348h1v1h-1zM721 355h1v1h-1zM721 368h1v1h-1zM721 381h1v1h-1zM721 394h1v1h-1zM721 407h1v1h-1zM721 420h1v1h-1zM721 433h1v1h-1zM721 446h1v1h-1zM721 459h1v1h-1zM721 472h1v1h-1zM721 485h1v1h-1zM721 498h1v1h-1zM721 511h1v1h-1zM721 524h1v1h-1zM721 537h1v1h-1zM721 550h1v1h-1zM721 563h1v1h-1zM721 576h1v1h-1zM721 589h1v1h-1zM721 602h1v1h-1zM721 615h1v1h-1zM721 628h1v1h-1zM721 641h1v1h-1zM721 654h1v1h-1zM721 662h1v1h-1zM721 664h1v1h-1zM721 666h1v1h-1zM723 342h1v1h-1zM725 342h1v1h-1zM727 342h1v1h-1zM729 342h1v1h-1zM731 342h1v1h-1zM733 342h1v1h-1zM735 342h1v1h-1zM737 342h1v1h-1zM739 342h1v1h-1zM741 17h1v1h-1zM741 19h1v1h-1zM741 82h1v1h-1zM741 147h1v1h-1zM741 212h1v1h-1zM741 277h1v1h-1zM741 339h1v1h-1zM741 341h1v1h-1zM741 342h1v1h-1zM741 343h1v1h-1zM741 345h1v1h-1zM741 407h1v1h-1zM741 472h1v1h-1zM741 537h1v1h-1zM741 602h1v1h-1zM741 665h1v1h-1zM741 667h1v1h-1zM743 342h1v1h-1zM745 342h1v1h-1zM747 342h1v1h-1zM749 342h1v1h-1zM751 342h1v1h-1zM753 342h1v1h-1zM755 342h1v1h-1zM757 342h1v1h-1zM759 342h1v1h-1zM761 17h1v1h-1zM761 19h1v1h-1zM761 82h1v1h-1zM761 147h1v1h-1zM761 212h1v1h-1zM761 277h1v1h-1zM761 339h1v1h-1zM761 341h1v1h-1zM761 342h1v1h-1zM761 343h1v1h-1zM761 345h1v1h-1zM761 407h1v1h-1zM761 472h1v1h-1zM761 537h1v1h-1zM761 602h1v1h-1zM761 665h1v1h-1zM761 667h1v1h-1zM763 342h1v1h-1zM765 342h1v1h-1zM767 342h1v1h-1zM769 342h1v1h-1zM771 342h1v1h-1zM773 342h1v1h-1zM775 342h1v1h-1zM777 342h1v1h-1zM779 342h1v1h-1zM781 17h1v1h-1zM781 19h1v1h-1zM781 82h1v1h-1zM781 147h1v1h-1zM781 212h1v1h-1zM781 277h1v1h-1zM781 339h1v1h-1zM781 341h1v1h-1zM781 342h1v1h-1zM781 343h1v1h-1zM781 345h1v1h-1zM781 407h1v1h-1zM781 472h1v1h-1zM781 537h1v1h-1zM781 602h1v1h-1zM781 665h1v1h-1zM781 667h1v1h-1zM783 342h1v1h-1zM785 342h1v1h-1zM787 342h1v1h-1zM789 342h1v1h-1zM791 342h1v1h-1zM793 342h1v1h-1zM795 342h1v1h-1zM797 342h1v1h-1zM799 342h1v1h-1zM801 17h1v1h-1zM801 19h1v1h-1zM801 82h1v1h-1zM801 147h1v1h-1zM801 212h1v1h-1zM801 277h1v1h-1zM801 339h1v1h-1zM801 341h1v1h-1zM801 342h1v1h-1zM801 343h1v1h-1zM801 345h1v1h-1zM801 407h1v1h-1zM801 472h1v1h-1zM801 537h1v1h-1zM801 602h1v1h-1zM801 665h1v1h-1zM801 667h1v1h-1zM803 342h1v1h-1zM805 342h1v1h-1zM807 342h1v1h-1zM809 342h1v1h-1zM811 342h1v1h-1zM813 342h1v1h-1zM815 342h1v1h-1zM817 342h1v1h-1zM819 342h1v1h-1zM821 18h1v1h-1zM821 20h1v1h-1zM821 22h1v1h-1zM821 30h1v1h-1zM821 43h1v1h-1zM821 56h1v1h-1zM821 69h1v1h-1zM821 82h1v1h-1zM821 95h1v1h-1zM821 108h1v1h-1zM821 121h1v1h-1zM821 134h1v1h-1zM821 147h1v1h-1zM821 160h1v1h-1zM821 173h1v1h-1zM821 186h1v1h-1zM821 199h1v1h-1zM821 212h1v1h-1zM821 225h1v1h-1zM821 238h1v1h-1zM821 251h1v1h-1zM821 264h1v1h-1zM821 277h1v1h-1zM821 290h1v1h-1zM821 303h1v1h-1zM821 316h1v1h-1zM821 329h1v1h-1zM821 336h1v1h-1zM821 338h1v1h-1zM821 339h1v1h-1zM821 340h1v1h-1zM821 341h1v1h-1zM821 342h1v1h-1zM821 343h1v1h-1zM821 344h1v1h-1zM821 345h1v1h-1zM821 346h1v1h-1zM821 348h1v1h-1zM821 355h1v1h-1zM821 368h1v1h-1zM821 381h1v1h-1zM821 394h1v1h-1zM821 407h1v1h-1zM821 420h1v1h-1zM821 433h1v1h-1zM821 446h1v1h-1zM821 459h1v1h-1zM821 472h1v1h-1zM821 485h1v1h-1zM821 498h1v1h-1zM821 511h1v1h-1zM821 524h1v1h-1zM821 537h1v1h-1zM821 550h1v1h-1zM821 563h1v1h-1zM821 576h1v1h-1zM821 589h1v1h-1zM821 602h1v1h-1zM821 615h1v1h-1zM821 628h1v1h-1zM821 641h1v1h-1zM821 654h1v1h-1zM821 662h1v1h-1zM821 664h1v1h-1zM821 666h1v1h-1zM823 342h1v1h-1zM825 342h1v1h-1zM827 342h1v1h-1zM829 342h1v1h-1zM831 342h1v1h-1zM833 342h1v1h-1zM835 342h1v1h-1zM837 342h1v1h-1zM839 342h1v1h-1zM841 17h1v1h-1zM841 19h1v1h-1zM841 82h1v1h-1zM841 147h1v1h-1zM841 212h1v1h-1zM841 277h1v1h-1zM841 339h1v1h-1zM841 341h1v1h-1zM841 342h1v1h-1zM841 343h1v1h-1zM841 345h1v1h-1zM841 407h1v1h-1zM841 472h1v1h-1zM841 537h1v1h-1zM841 602h1v1h-1zM841 665h1v1h-1zM841 667h1v1h-1zM843 342h1v1h-1zM845 342h1v1h-1zM847 342h1v1h-1zM849 342h1v1h-1zM851 342h1v1h-1zM853 342h1v1h-1zM855 342h1v1h-1zM857 342h1v1h-1zM859 342h1v1h-1zM861 17h1v1h-1zM861 19h1v1h-1zM861 82h1v1h-1zM861 147h1v1h-1zM861 212h1v1h-1zM861 277h1v1h-1zM861 339h1v1h-1zM861 341h1v1h-1zM861 342h1v1h-1zM861 343h1v1h-1zM861 345h1v1h-1zM861 407h1v1h-1zM861 472h1v1h-1zM861 537h1v1h-1zM861 602h1v1h-1zM861 665h1v1h-1zM861 667h1v1h-1zM863 342h1v1h-1zM865 342h1v1h-1zM867 342h1v1h-1zM869 342h1v1h-1zM871 342h1v1h-1zM873 342h1v1h-1zM875 342h1v1h-1zM877 342h1v1h-1zM879 342h1v1h-1zM881 17h1v1h-1zM881 19h1v1h-1zM881 82h1v1h-1zM881 147h1v1h-1zM881 212h1v1h-1zM881 277h1v1h-1zM881 339h1v1h-1zM881 341h1v1h-1zM881 342h1v1h-1zM881 343h1v1h-1zM881 345h1v1h-1zM881 407h1v1h-1zM881 472h1v1h-1zM881 537h1v1h-1zM881 602h1v1h-1zM881 665h1v1h-1zM881 667h1v1h-1zM883 342h1v1h-1zM885 342h1v1h-1zM887 342h1v1h-1zM889 342h1v1h-1zM891 342h1v1h-1zM893 342h1v1h-1zM895 342h1v1h-1zM897 342h1v1h-1zM899 342h1v1h-1zM901 17h1v1h-1zM901 19h1v1h-1zM901 82h1v1h-1zM901 147h1v1h-1zM901 212h1v1h-1zM901 277h1v1h-1zM901 339h1v1h-1zM901 341h1v1h-1zM901 342h1v1h-1zM901 343h1v1h-1zM901 345h1v1h-1zM901 407h1v1h-1zM901 472h1v1h-1zM901 537h1v1h-1zM901 602h1v1h-1zM901 665h1v1h-1zM901 667h1v1h-1zM903 342h1v1h-1zM905 342h1v1h-1zM907 342h1v1h-1zM909 342h1v1h-1zM911 342h1v1h-1zM913 342h1v1h-1zM915 342h1v1h-1zM917 342h1v1h-1zM919 342h1v1h-1zM921 18h1v1h-1zM921 20h1v1h-1zM921 22h1v1h-1zM921 30h1v1h-1zM921 43h1v1h-1zM921 56h1v1h-1zM921 69h1v1h-1zM921 82h1v1h-1zM921 95h1v1h-1zM921 108h1v1h-1zM921 121h1v1h-1zM921 134h1v1h-1zM921 147h1v1h-1zM921 160h1v1h-1zM921 173h1v1h-1zM921 186h1v1h-1zM921 199h1v1h-1zM921 212h1v1h-1zM921 225h1v1h-1zM921 238h1v1h-1zM921 251h1v1h-1zM921 264h1v1h-1zM921 277h1v1h-1zM921 290h1v1h-1zM921 303h1v1h-1zM921 316h1v1h-1zM921 329h1v1h-1zM921 336h1v1h-1zM921 338h1v1h-1zM921 339h1v1h-1zM921 340h1v1h-1zM921 341h1v1h-1zM921 342h1v1h-1zM921 343h1v1h-1zM921 344h1v1h-1zM921 345h1v1h-1zM921 346h1v1h-1zM921 348h1v1h-1zM921 355h1v1h-1zM921 368h1v1h-1zM921 381h1v1h-1zM921 394h1v1h-1zM921 407h1v1h-1zM921 420h1v1h-1zM921 433h1v1h-1zM921 446h1v1h-1zM921 459h1v1h-1zM921 472h1v1h-1zM921 485h1v1h-1zM921 498h1v1h-1zM921 511h1v1h-1zM921 524h1v1h-1zM921 537h1v1h-1zM921 550h1v1h-1zM921 563h1v1h-1zM921 576h1v1h-1zM921 589h1v1h-1zM921 602h1v1h-1zM921 615h1v1h-1zM921 628h1v1h-1zM921 641h1v1h-1zM921 654h1v1h-1zM921 662h1v1h-1zM921 664h1v1h-1zM921 666h1v1h-1zM923 342h1v1h-1zM925 342h1v1h-1zM927 342h1v1h-1zM929 342h1v1h-1zM931 342h1v1h-1zM933 342h1v1h-1zM935 342h1v1h-1zM937 342h1v1h-1zM939 342h1v1h-1zM941 17h1v1h-1zM941 19h1v1h-1zM941 82h1v1h-1zM941 147h1v1h-1zM941 212h1v1h-1zM941 277h1v1h-1zM941 339h1v1h-1zM941 341h1v1h-1zM941 342h1v1h-1zM941 343h1v1h-1zM941 345h1v1h-1zM941 407h1v1h-1zM941 472h1v1h-1zM941 537h1v1h-1zM941 602h1v1h-1zM941 665h1v1h-1zM941 667h1v1h-1zM943 342h1v1h-1zM945 342h1v1h-1zM947 342h1v1h-1zM949 342h1v1h-1zM951 342h1v1h-1zM953 342h1v1h-1zM955 342h1v1h-1zM957 342h1v1h-1zM959 342h1v1h-1zM961 17h1v1h-1zM961 19h1v1h-1zM961 82h1v1h-1zM961 147h1v1h-1zM961 212h1v1h-1zM961 277h1v1h-1zM961 339h1v1h-1zM961 341h1v1h-1zM961 342h1v1h-1zM961 343h1v1h-1zM961 345h1v1h-1zM961 407h1v1h-1zM961 472h1v1h-1zM961 537h1v1h-1zM961 602h1v1h-1zM961 665h1v1h-1zM961 667h1v1h-1zM963 342h1v1h-1zM965 342h1v1h-1zM967 342h1v1h-1zM969 342h1v1h-1zM971 342h1v1h-1zM973 342h1v1h-1zM975 342h1v1h-1zM977 342h1v1h-1zM979 342h1v1h-1zM981 17h1v1h-1zM981 19h1v1h-1zM981 82h1v1h-1zM981 147h1v1h-1zM981 212h1v1h-1zM981 277h1v1h-1zM981 339h1v1h-1zM981 341h1v1h-1zM981 342h1v1h-1zM981 343h1v1h-1zM981 345h1v1h-1zM981 407h1v1h-1zM981 472h1v1h-1zM981 537h1v1h-1zM981 602h1v1h-1zM981 665h1v1h-1zM981 667h1v1h-1zM983 342h1v1h-1zM985 342h1v1h-1zM987 342h1v1h-1zM989 342h1v1h-1zM991 342h1v1h-1zM993 342h1v1h-1zM995 342h1v1h-1zM997 342h1v1h-1zM999 342h1v1h-1zM1001 17h1v1h-1zM1001 19h1v1h-1zM1001 82h1v1h-1zM1001 147h1v1h-1zM1001 212h1v1h-1zM1001 277h1v1h-1zM1001 339h1v1h-1zM1001 341h1v1h-1zM1001 342h1v1h-1zM1001 343h1v1h-1zM1001 345h1v1h-1zM1001 407h1v1h-1zM1001 472h1v1h-1zM1001 537h1v1h-1zM1001 602h1v1h-1zM1001 665h1v1h-1zM1001 667h1v1h-1zM1003 342h1v1h-1zM1005 342h1v1h-1zM1007 342h1v1h-1zM1009 342h1v1h-1zM1011 342h1v1h-1zM1013 342h1v1h-1zM1015 82h1v1h-1zM1015 147h1v1h-1zM1015 212h1v1h-1zM1015 277h1v1h-1zM1015 342h1v1h-1zM1015 407h1v1h-1zM1015 472h1v1h-1zM1015 537h1v1h-1zM1015 602h1v1h-1zM1017 82h1v1h-1zM1017 147h1v1h-1zM1017 212h1v1h-1zM1017 277h1v1h-1zM1017 342h1v1h-1zM1017 407h1v1h-1zM1017 472h1v1h-1zM1017 537h1v1h-1zM1017 602h1v1h-1zM1018 30h1v1h-1zM1018 43h1v1h-1zM1018 56h1v1h-1zM1018 69h1v1h-1zM1018 95h1v1h-1zM1018 108h1v1h-1zM1018 121h1v1h-1zM1018 134h1v1h-1zM1018 160h1v1h-1zM1018 173h1v1h-1zM1018 186h1v1h-1zM1018 199h1v1h-1zM1018 225h1v1h-1zM1018 238h1v1h-1zM1018 251h1v1h-1zM1018 264h1v1h-1zM1018 290h1v1h-1zM1018 303h1v1h-1zM1018 316h1v1h-1zM1018 329h1v1h-1zM1018 355h1v1h-1zM1018 368h1v1h-1zM1018 381h1v1h-1zM1018 394h1v1h-1zM1018 420h1v1h-1zM1018 433h1v1h-1zM1018 446h1v1h-1zM1018 459h1v1h-1zM1018 485h1v1h-1zM1018 498h1v1h-1zM1018 511h1v1h-1zM1018 524h1v1h-1zM1018 550h1v1h-1zM1018 563h1v1h-1zM1018 576h1v1h-1zM1018 589h1v1h-1zM1018 615h1v1h-1zM1018 628h1v1h-1zM1018 641h1v1h-1zM1018 654h1v1h-1zM1019 82h1v1h-1zM1019 147h1v1h-1zM1019 212h1v1h-1zM1019 277h1v1h-1zM1019 342h1v1h-1zM1019 407h1v1h-1zM1019 472h1v1h-1zM1019 537h1v1h-1zM1019 602h1v1h-1zM1020 30h1v1h-1zM1020 43h1v1h-1zM1020 56h1v1h-1zM1020 69h1v1h-1zM1020 95h1v1h-1zM1020 108h1v1h-1zM1020 121h1v1h-1zM1020 134h1v1h-1zM1020 160h1v1h-1zM1020 173h1v1h-1zM1020 186h1v1h-1zM1020 199h1v1h-1zM1020 225h1v1h-1zM1020 238h1v1h-1zM1020 251h1v1h-1zM1020 264h1v1h-1zM1020 290h1v1h-1zM1020 303h1v1h-1zM1020 316h1v1h-1zM1020 329h1v1h-1zM1020 355h1v1h-1zM1020 368h1v1h-1zM1020 381h1v1h-1zM1020 394h1v1h-1zM1020 420h1v1h-1zM1020 433h1v1h-1zM1020 446h1v1h-1zM1020 459h1v1h-1zM1020 485h1v1h-1zM1020 498h1v1h-1zM1020 511h1v1h-1zM1020 524h1v1h-1zM1020 550h1v1h-1zM1020 563h1v1h-1zM1020 576h1v1h-1zM1020 589h1v1h-1zM1020 615h1v1h-1zM1020 628h1v1h-1zM1020 641h1v1h-1zM1020 654h1v1h-1z"/>
</svg>
<svg width="1024" height="768" viewBox="0 0 1024 768" style="position:absolute;left:0;top:0"><path fill="#ff9900" d="M518 1H526L522 5z"/><rect x="517" y="5" width="9" height="11" rx="2" fill="#ff9900"/><rect x="519" y="7" width="5" height="2" fill="#000"/><rect x="520" y="7" width="2" height="7" fill="#000"/><rect x="521" y="1" width="2" height="14" fill="#ffffff"/><path fill="#ff9900" d="M516 17H528L522 23z"/><path fill="#ff9900" d="M515 26Q515 24 517 24H526Q528 24 528 26V35L521.5 39L515 35z"/><rect x="517" y="26" width="10" height="2" fill="#000"/><rect x="520" y="26" width="3" height="10" fill="#000"/><path fill="#b000b8" d="M0 76L1 75H13L21 83L13 92H1L0 91z"/><path fill="#e060e8" d="M1 75H13L14 76H0z"/><path fill="#780078" d="M0 91H14L13 92H1z"/><path fill="none" stroke="#f0f000" stroke-width="2" d="M1 655H13L20 662.5L13 670H1V655z"/><path fill="#f0f000" d="M7 657h2v12h-2zM5 658h2v2h-2z"/><path fill="#f0f000" d="M1010 638.5L1016 633V644z"/><rect x="1016" y="638" width="5" height="1" fill="#f0f000"/><rect x="20.5" y="670.5" width="554" height="20" rx="6" ry="6" fill="none" stroke="#c8c8c8" stroke-width="1"/><rect x="26" y="673" width="26" height="16" rx="8" fill="#ffff00"/><path fill="#000" d="M38 675h2v11h-2zM36 676h2v1.5h-2z"/><rect x="304" y="673" width="26" height="16" rx="8" fill="#a010a8"/><path fill="#f0f000" d="M144 675h1v1h-1zM145 675h1v1h-1zM146 675h1v1h-1zM144 676h1v1h-1zM147 676h1v1h-1zM144 677h1v1h-1zM147 677h1v1h-1zM144 678h1v1h-1zM145 678h1v1h-1zM146 678h1v1h-1zM144 679h1v1h-1zM147 679h1v1h-1zM144 680h1v1h-1zM147 680h1v1h-1zM144 681h1v1h-1zM145 681h1v1h-1zM146 681h1v1h-1zM148 679h1v1h-1zM148 680h1v1h-1zM148 681h1v1h-1zM148 682h1v1h-1zM148 683h1v1h-1zM150 681h1v1h-1zM150 682h1v1h-1zM150 683h1v1h-1zM152 679h1v1h-1zM152 680h1v1h-1zM152 681h1v1h-1zM152 682h1v1h-1zM152 683h1v1h-1zM149 684h1v1h-1zM149 685h1v1h-1zM151 684h1v1h-1zM151 685h1v1h-1z"/><path fill="#b000c0" d="M422 675h1v1h-1zM423 675h1v1h-1zM424 675h1v1h-1zM422 676h1v1h-1zM425 676h1v1h-1zM422 677h1v1h-1zM425 677h1v1h-1zM422 678h1v1h-1zM423 678h1v1h-1zM424 678h1v1h-1zM422 679h1v1h-1zM425 679h1v1h-1zM422 680h1v1h-1zM425 680h1v1h-1zM422 681h1v1h-1zM423 681h1v1h-1zM424 681h1v1h-1zM426 679h1v1h-1zM426 680h1v1h-1zM426 681h1v1h-1zM426 682h1v1h-1zM426 683h1v1h-1zM428 681h1v1h-1zM428 682h1v1h-1zM428 683h1v1h-1zM430 679h1v1h-1zM430 680h1v1h-1zM430 681h1v1h-1zM430 682h1v1h-1zM430 683h1v1h-1zM427 684h1v1h-1zM427 685h1v1h-1zM429 684h1v1h-1zM429 685h1v1h-1z"/><rect x="582.5" y="670.5" width="147" height="37" rx="7" ry="7" fill="none" stroke="#c8c8c8" stroke-width="1"/><rect x="587" y="691" width="12" height="13" rx="2" fill="#ff9900"/><rect x="589" y="693" width="8" height="2" fill="#000"/><rect x="592" y="693" width="2" height="9" fill="#000"/><rect x="600" y="697" width="7" height="2" fill="#ff9900"/><path fill="#ff9900" d="M605 694L610 698L605 702z"/><path fill="#ff9900" d="M610 694H622L616 701z"/><rect x="738.5" y="670.5" width="105" height="37" rx="7" ry="7" fill="none" stroke="#c8c8c8" stroke-width="1"/><rect x="851.5" y="670.5" width="170" height="37" rx="7" ry="7" fill="none" stroke="#c8c8c8" stroke-width="1"/><rect x="882" y="673" width="25" height="16" rx="8" fill="#ffff00"/><path fill="#000" d="M894 675h2v11h-2zM892 676h2v1.5h-2z"/><path fill="none" stroke="#f4f4f4" stroke-width="1.6" d="M920 685.2H925L929 676.2H932.5"/><path fill="#a800a8" d="M0 714H10Q17 714 17 721V761Q17 768 10 768H0z"/><path d="M20 768V718Q20 714 24 714H130Q134 714 134 718V768z" fill="#6c6c6c"/><path d="M20 716V718Q20 714 24 714H130Q134 714 134 718V716z" fill="#8c8c8c"/><rect x="22" y="716" width="110" height="52" fill="#555753"/><path d="M138 768V718Q138 714 142 714H248Q252 714 252 718V768z" fill="#6c6c6c"/><path d="M138 716V718Q138 714 142 714H248Q252 714 252 718V716z" fill="#8c8c8c"/><rect x="140" y="716" width="110" height="52" fill="#555753"/><path d="M256 768V718Q256 714 260 714H366Q370 714 370 718V768z" fill="#6c6c6c"/><path d="M256 716V718Q256 714 260 714H366Q370 714 370 718V716z" fill="#8c8c8c"/><rect x="258" y="716" width="110" height="52" fill="#555753"/><path d="M374 764V718Q374 714 378 714H485Q489 714 489 718V764Q489 768 485 768H378Q374 768 374 764z" fill="#6c6c6c"/><path d="M374 716V718Q374 714 378 714H485Q489 714 489 718V716z" fill="#8c8c8c"/><path d="M374 766V764Q374 768 378 768H485Q489 768 489 764V766z" fill="#858585"/><rect x="376" y="716" width="111" height="50" fill="#555753"/><path d="M492 764V718Q492 714 496 714H602Q606 714 606 718V764Q606 768 602 768H496Q492 768 492 764z" fill="#6c6c6c"/><path d="M492 716V718Q492 714 496 714H602Q606 714 606 718V716z" fill="#8c8c8c"/><path d="M492 766V764Q492 768 496 768H602Q606 768 606 764V766z" fill="#858585"/><rect x="494" y="716" width="110" height="50" fill="#555753"/><path d="M728 764V718Q728 714 732 714H839Q843 714 843 718V764Q843 768 839 768H732Q728 768 728 764z" fill="#6c6c6c"/><path d="M728 716V718Q728 714 732 714H839Q843 714 843 718V716z" fill="#8c8c8c"/><path d="M728 766V764Q728 768 732 768H839Q843 768 843 764V766z" fill="#858585"/><rect x="730" y="716" width="111" height="50" fill="#555753"/><rect x="33.5" y="742.5" width="29" height="25" rx="2.5" fill="#0a6eff" stroke="#dfe6f6" stroke-width="1"/><rect x="202.5" y="742.5" width="41" height="25" rx="2.5" fill="#0a6eff" stroke="#dfe6f6" stroke-width="1"/><rect x="325.5" y="742.5" width="32" height="25" rx="2.5" fill="#0a6eff" stroke="#dfe6f6" stroke-width="1"/><rect x="90" y="742" width="30" height="26" fill="#2e2e2e"/><rect x="401" y="742" width="60" height="16" fill="#0a6eff"/><rect x="514" y="733" width="26" height="17" rx="8.5" fill="#a010a8"/><defs><linearGradient id="mg" x1="0" y1="0" x2="0" y2="1"><stop offset="0" stop-color="#ffffff"/><stop offset="0.55" stop-color="#e8e8e8"/><stop offset="0.8" stop-color="#888"/><stop offset="1" stop-color="#bbb"/></linearGradient></defs><path fill="url(#mg)" d="M785 727L797 739H773z"/><rect x="909.5" y="729.5" width="112" height="36" rx="6" ry="6" fill="none" stroke="#c8c8c8" stroke-width="1"/></svg>
<div class="t" style="left:0.0px;top:-1px;font-family:'Liberation Serif',serif;font-weight:bold;font-size:20px;color:#eeeeff;letter-spacing:0.0px;-webkit-text-stroke:0;transform:scaleX(0.9688)">Tek</div>
<div class="t" style="left:35.0px;top:1px;font-family:'Liberation Sans',sans-serif;font-weight:normal;font-size:15.75px;color:#f4f4ff;letter-spacing:1.0px;transform:scaleX(1.0)">Run</div>
<div class="t" style="left:925.0px;top:0px;font-family:'Liberation Sans',sans-serif;font-weight:normal;font-size:16px;color:#f4f4ff;letter-spacing:1.0px;transform:scaleX(1.0)">Trig?</div>
<div class="t" style="left:68.0px;top:674px;font-family:'Liberation Sans',sans-serif;font-weight:normal;font-size:15.75px;color:#f0f000;letter-spacing:1.0px;transform:scaleX(1.0)">5.00 V</div>
<div class="t" style="left:311.86px;top:674px;font-family:'Liberation Sans',sans-serif;font-weight:normal;font-size:15.75px;color:#000;letter-spacing:0.0px;-webkit-text-stroke:0;transform:scaleX(1.1429)">3</div>
<div class="t" style="left:347.0px;top:674px;font-family:'Liberation Sans',sans-serif;font-weight:normal;font-size:15.75px;color:#b000c0;letter-spacing:1.5px;transform:scaleX(1.0)">50.0mVΩ</div>
<div class="t" style="left:587.0px;top:674px;font-family:'Liberation Sans',sans-serif;font-weight:normal;font-size:15.75px;color:#f4f4f4;letter-spacing:1.5px;transform:scaleX(1.0)">400ns</div>
<div class="t" style="left:623.0px;top:691px;font-family:'Liberation Sans',sans-serif;font-weight:normal;font-size:15.75px;color:#ff9900;letter-spacing:1.0px;transform:scaleX(1.0)">0.000000 s</div>
<div class="t" style="left:744.0px;top:674px;font-family:'Liberation Sans',sans-serif;font-weight:normal;font-size:15.75px;color:#f4f4f4;letter-spacing:0.857px;transform:scaleX(1.0)">2.50GS/s</div>
<div class="t" style="left:744.0px;top:690px;font-family:'Liberation Sans',sans-serif;font-weight:normal;font-size:15.75px;color:#f4f4f4;letter-spacing:1.375px;transform:scaleX(1.0)">5M points</div>
<div class="t" style="left:966.0px;top:674px;font-family:'Liberation Sans',sans-serif;font-weight:normal;font-size:15.75px;color:#f4f4f4;letter-spacing:0.8px;transform:scaleX(1.0)">1.80 V</div>
<div class="t" style="left:42.0px;top:720px;font-family:'Liberation Sans',sans-serif;font-weight:normal;font-size:15.75px;color:#f4f4f4;letter-spacing:1.429px;transform:scaleX(1.0)">Coupling</div>
<div class="t" style="left:38.0px;top:748px;font-family:'Liberation Sans',sans-serif;font-weight:normal;font-size:15.75px;color:#ffffff;letter-spacing:0.0px;transform:scaleX(1.0)">DC</div>
<div class="t" style="left:95.0px;top:748px;font-family:'Liberation Sans',sans-serif;font-weight:normal;font-size:15.75px;color:#6a6a6a;letter-spacing:0.0px;transform:scaleX(1.0476)">AC</div>
<div class="t" style="left:146.0px;top:721px;font-family:'Liberation Sans',sans-serif;font-weight:normal;font-size:15.75px;color:#f4f4f4;letter-spacing:1.7px;transform:scaleX(1.0)">Termination</div>
<div class="t" style="left:148.94px;top:748px;font-family:'Liberation Sans',sans-serif;font-weight:normal;font-size:15.75px;color:#f4f4f4;letter-spacing:0.0px;transform:scaleX(1.0606)">1MΩ</div>
<div class="t" style="left:208.0px;top:748px;font-family:'Liberation Sans',sans-serif;font-weight:normal;font-size:15.75px;color:#ffffff;letter-spacing:0.0px;transform:scaleX(1.069)">50Ω</div>
<div class="t" style="left:288.0px;top:721px;font-family:'Liberation Sans',sans-serif;font-weight:normal;font-size:15.75px;color:#f4f4f4;letter-spacing:2.0px;transform:scaleX(1.0)">Invert</div>
<div class="t" style="left:273.0px;top:748px;font-family:'Liberation Sans',sans-serif;font-weight:normal;font-size:15.75px;color:#f4f4f4;letter-spacing:0.0px;transform:scaleX(1.15)">On</div>
<div class="t" style="left:330.0px;top:747px;font-family:'Liberation Sans',sans-serif;font-weight:normal;font-size:15.75px;color:#ffffff;letter-spacing:0.0px;transform:scaleX(1.1905)">Off</div>
<div class="t" style="left:389.0px;top:725px;font-family:'Liberation Sans',sans-serif;font-weight:normal;font-size:15.75px;color:#f4f4f4;letter-spacing:1.5px;transform:scaleX(1.0)">Bandwidth</div>
<div class="t" style="left:405.0px;top:743px;font-family:'Liberation Sans',sans-serif;font-weight:normal;font-size:15.75px;color:#ffffff;letter-spacing:1.0px;transform:scaleX(1.0)">20MHz</div>
<div class="t" style="left:521.86px;top:734px;font-family:'Liberation Sans',sans-serif;font-weight:normal;font-size:15.75px;color:#000;letter-spacing:0.0px;-webkit-text-stroke:0;transform:scaleX(1.1429)">3</div>
<div class="t" style="left:546.0px;top:734px;font-family:'Liberation Sans',sans-serif;font-weight:normal;font-size:15.75px;color:#f4f4f4;letter-spacing:0.5px;transform:scaleX(1.0)">Label</div>
<div class="t" style="left:766.0px;top:741px;font-family:'Liberation Sans',sans-serif;font-weight:normal;font-size:15.75px;color:#f4f4f4;letter-spacing:1.667px;transform:scaleX(1.0)">More</div>
<div class="t" style="left:916.0px;top:734px;font-family:'Liberation Sans',sans-serif;font-weight:normal;font-size:15.75px;color:#f4f4f4;letter-spacing:1.4px;transform:scaleX(1.0)">15 Apr</div>
<div class="t" style="left:979.0px;top:734px;font-family:'Liberation Sans',sans-serif;font-weight:normal;font-size:15.75px;color:#f4f4f4;letter-spacing:1.0px;transform:scaleX(1.0)">2024</div>
<div class="t" style="left:916.0px;top:750px;font-family:'Liberation Sans',sans-serif;font-weight:normal;font-size:15.75px;color:#f4f4f4;letter-spacing:1.429px;transform:scaleX(1.0)">13:11:26</div>
<div class="t" style="left:3.86px;top:735px;font-family:'Liberation Sans',sans-serif;font-weight:normal;font-size:14.5px;color:#000;letter-spacing:0.0px;-webkit-text-stroke:0;transform:scaleX(1.1429)">3</div>
<div class="t" style="left:2.86px;top:77px;font-family:'Liberation Sans',sans-serif;font-weight:normal;font-size:16px;color:#000;letter-spacing:0.0px;-webkit-text-stroke:0;transform:scaleX(1.1429)">3</div>
</body></html>
